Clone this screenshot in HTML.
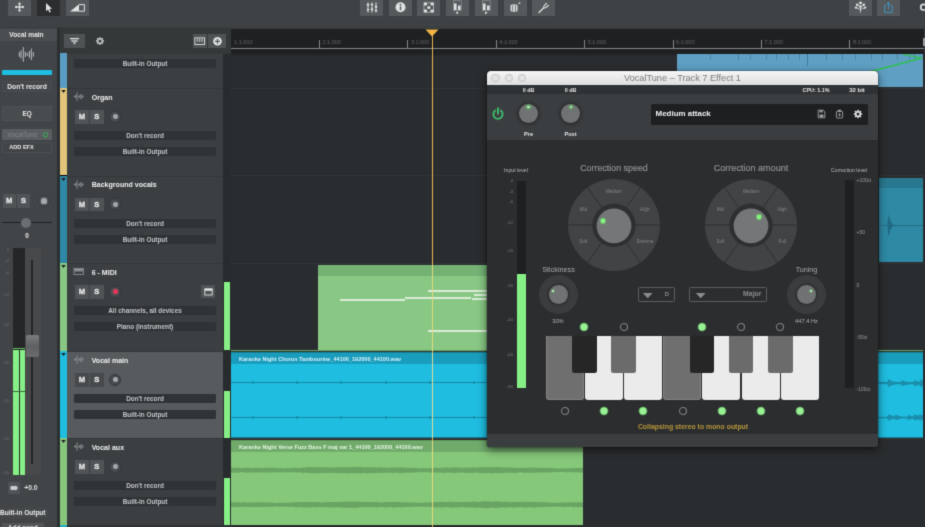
<!DOCTYPE html>
<html><head><meta charset="utf-8"><title>DAW</title>
<style>
html,body{margin:0;padding:0;}
body{width:925px;height:527px;overflow:hidden;background:#2a2d2f;position:relative;font-family:"Liberation Sans",sans-serif;}
#root{position:absolute;left:0;top:0;width:925px;height:527px;overflow:hidden;will-change:transform;filter:url(#sb);}
#root div,#root svg{position:absolute;box-sizing:border-box;}
.t{white-space:nowrap;overflow:visible;}
</style></head><body><svg width="0" height="0" style="position:absolute"><filter id="sb" x="0" y="0" width="100%" height="100%" color-interpolation-filters="sRGB"><feConvolveMatrix order="3" kernelMatrix="0.01917 0.10012 0.01917 0.10012 0.52283 0.10012 0.01917 0.10012 0.01917" divisor="1" edgeMode="duplicate" preserveAlpha="true"/></filter></svg><div id="root">
<div style="left:230px;top:28px;width:695px;height:499px;background:#2a2d2f;"></div>
<div style="left:231px;top:28px;width:693px;height:26px;background:#1e2022;"></div>
<div style="left:231px;top:48px;width:693px;height:1px;background:#85878a;"></div>
<div style="left:231px;top:54px;width:693px;height:3px;background:#2a2d2f;background:linear-gradient(#222527,#2a2d2f);"></div>
<div style="left:924px;top:28px;width:1px;height:26px;background:#3a3d3f;"></div>
<div style="left:923px;top:38px;width:2px;height:8px;background:#9a9c9e;"></div>
<div class="t" style="left:234.1px;top:38px;width:40px;height:9px;line-height:9px;font-size:5.5px;color:#62666a;font-weight:normal;text-align:left;">1:1:000</div>
<div style="left:319.0px;top:40px;width:1px;height:9px;background:#85878a;"></div>
<div class="t" style="left:322.5px;top:38px;width:40px;height:9px;line-height:9px;font-size:5.5px;color:#62666a;font-weight:normal;text-align:left;">2:1:000</div>
<div style="left:407.4px;top:40px;width:1px;height:9px;background:#85878a;"></div>
<div class="t" style="left:410.9px;top:38px;width:40px;height:9px;line-height:9px;font-size:5.5px;color:#62666a;font-weight:normal;text-align:left;">3:1:000</div>
<div style="left:495.8px;top:40px;width:1px;height:9px;background:#85878a;"></div>
<div class="t" style="left:499.3px;top:38px;width:40px;height:9px;line-height:9px;font-size:5.5px;color:#62666a;font-weight:normal;text-align:left;">4:1:000</div>
<div style="left:584.2px;top:40px;width:1px;height:9px;background:#85878a;"></div>
<div class="t" style="left:587.7px;top:38px;width:40px;height:9px;line-height:9px;font-size:5.5px;color:#62666a;font-weight:normal;text-align:left;">5:1:000</div>
<div style="left:672.6px;top:40px;width:1px;height:9px;background:#85878a;"></div>
<div class="t" style="left:676.1px;top:38px;width:40px;height:9px;line-height:9px;font-size:5.5px;color:#62666a;font-weight:normal;text-align:left;">6:1:000</div>
<div style="left:761.0px;top:40px;width:1px;height:9px;background:#85878a;"></div>
<div class="t" style="left:764.5px;top:38px;width:40px;height:9px;line-height:9px;font-size:5.5px;color:#62666a;font-weight:normal;text-align:left;">7:1:000</div>
<div style="left:849.4px;top:40px;width:1px;height:9px;background:#85878a;"></div>
<div class="t" style="left:852.9px;top:38px;width:40px;height:9px;line-height:9px;font-size:5.5px;color:#62666a;font-weight:normal;text-align:left;">8:1:000</div>
<div style="left:231px;top:88.3px;width:694px;height:1px;background:#323537;"></div>
<div style="left:231px;top:175.3px;width:694px;height:1px;background:#323537;"></div>
<div style="left:231px;top:263px;width:694px;height:1px;background:#323537;"></div>
<div style="left:231px;top:351px;width:694px;height:1px;background:#323537;"></div>
<div style="left:231px;top:438px;width:694px;height:1px;background:#323537;"></div>
<div style="left:677px;top:54px;width:246px;height:33.3px;background:#5f9fc3;"></div>
<div style="left:710px;top:54px;width:1px;height:5.5px;background:#4a86a8;"></div>
<div style="left:738px;top:54px;width:1px;height:5.5px;background:#4a86a8;"></div>
<div style="left:750px;top:54px;width:1px;height:5.5px;background:#4a86a8;"></div>
<div style="left:766px;top:54px;width:1px;height:5.5px;background:#4a86a8;"></div>
<div style="left:776px;top:54px;width:1px;height:5.5px;background:#4a86a8;"></div>
<div style="left:788px;top:54px;width:1px;height:5.5px;background:#4a86a8;"></div>
<div style="left:799px;top:54px;width:1px;height:5.5px;background:#4a86a8;"></div>
<div style="left:826px;top:54px;width:1px;height:5.5px;background:#4a86a8;"></div>
<div style="left:842px;top:54px;width:1px;height:5.5px;background:#4a86a8;"></div>
<div style="left:855px;top:54px;width:1px;height:5.5px;background:#4a86a8;"></div>
<div style="left:870.5px;top:54px;width:1px;height:5.5px;background:#4a86a8;"></div>
<div style="left:882px;top:54px;width:1px;height:5.5px;background:#4a86a8;"></div>
<div style="left:897px;top:54px;width:1px;height:5.5px;background:#4a86a8;"></div>
<div style="left:908.5px;top:54px;width:1px;height:5.5px;background:#4a86a8;"></div>
<div style="left:914px;top:54px;width:1px;height:5.5px;background:#4a86a8;"></div>
<div style="left:807px;top:54px;width:1px;height:12px;background:#3f7a9c;"></div>
<svg style="left:860px;top:54px" width="65" height="34" viewBox="0 0 65 34"><polyline points="8,18.3 61,4.3" fill="none" stroke="#2fc04e" stroke-width="1.4"/><polyline points="42.7,0.2 62.4,4.2" fill="none" stroke="#2fc04e" stroke-width="1.2"/></svg>
<div style="left:879px;top:178px;width:44.3px;height:84.3px;background:#2e89a4;"></div>
<div style="left:879px;top:178px;width:44.3px;height:10.4px;background:#29788f;"></div>
<div style="left:879px;top:225.2px;width:44.3px;height:1px;background:#256f88;"></div>
<svg style="left:879px;top:205px" width="45" height="40" viewBox="0 0 45 40"><path d="M8.3,20.5 L9.6,9 L11.4,16 L13.6,19.4 L18,20.5 L13.6,21.6 L11.4,25 L9.6,32 Z" fill="#226a83"/></svg>
<div style="left:318px;top:265px;width:552px;height:86px;background:#88c884;"></div>
<div style="left:318px;top:265px;width:552px;height:11px;background:#74b274;"></div>
<div style="left:231px;top:350px;width:692px;height:1.2px;background:#63a362;"></div>
<div style="left:339.5px;top:299.1px;width:65.7px;height:2px;background:#dcecd9;"></div>
<div style="left:405.3px;top:296.6px;width:66.2px;height:2px;background:#dcecd9;"></div>
<div style="left:427.5px;top:290.1px;width:90px;height:2.3px;background:#dcecd9;"></div>
<div style="left:474px;top:293.5px;width:40px;height:2px;background:#dcecd9;"></div>
<div style="left:472px;top:298.2px;width:40px;height:2px;background:#dcecd9;"></div>
<div style="left:427.5px;top:329.7px;width:90px;height:2.3px;background:#dcecd9;"></div>
<div style="left:231px;top:353px;width:692px;height:85px;background:#1fbde0;"></div>
<div style="left:231px;top:353px;width:692px;height:11px;background:#1a9dbd;"></div>
<div style="left:231px;top:352px;width:692px;height:1px;background:#16809a;"></div>
<div style="left:231px;top:437px;width:692px;height:1px;background:#16809a;"></div>
<div style="left:231px;top:382px;width:692px;height:1px;background:#178aa5;"></div>
<div style="left:231px;top:417px;width:692px;height:1px;background:#178aa5;"></div>
<div style="left:252px;top:381px;width:2px;height:3px;background:#178aa5;border-radius:1px;"></div>
<div style="left:252px;top:416px;width:2px;height:3px;background:#178aa5;border-radius:1px;"></div>
<div style="left:296px;top:381px;width:2px;height:3px;background:#178aa5;border-radius:1px;"></div>
<div style="left:296px;top:416px;width:2px;height:3px;background:#178aa5;border-radius:1px;"></div>
<div style="left:340px;top:381px;width:2px;height:3px;background:#178aa5;border-radius:1px;"></div>
<div style="left:340px;top:416px;width:2px;height:3px;background:#178aa5;border-radius:1px;"></div>
<div style="left:385px;top:381px;width:2px;height:3px;background:#178aa5;border-radius:1px;"></div>
<div style="left:385px;top:416px;width:2px;height:3px;background:#178aa5;border-radius:1px;"></div>
<div style="left:429px;top:381px;width:2px;height:3px;background:#178aa5;border-radius:1px;"></div>
<div style="left:429px;top:416px;width:2px;height:3px;background:#178aa5;border-radius:1px;"></div>
<div style="left:473px;top:381px;width:2px;height:3px;background:#178aa5;border-radius:1px;"></div>
<div style="left:473px;top:416px;width:2px;height:3px;background:#178aa5;border-radius:1px;"></div>
<div style="left:517px;top:381px;width:2px;height:3px;background:#178aa5;border-radius:1px;"></div>
<div style="left:517px;top:416px;width:2px;height:3px;background:#178aa5;border-radius:1px;"></div>
<div style="left:561px;top:381px;width:2px;height:3px;background:#178aa5;border-radius:1px;"></div>
<div style="left:561px;top:416px;width:2px;height:3px;background:#178aa5;border-radius:1px;"></div>
<div style="left:606px;top:381px;width:2px;height:3px;background:#178aa5;border-radius:1px;"></div>
<div style="left:606px;top:416px;width:2px;height:3px;background:#178aa5;border-radius:1px;"></div>
<div style="left:650px;top:381px;width:2px;height:3px;background:#178aa5;border-radius:1px;"></div>
<div style="left:650px;top:416px;width:2px;height:3px;background:#178aa5;border-radius:1px;"></div>
<div style="left:694px;top:381px;width:2px;height:3px;background:#178aa5;border-radius:1px;"></div>
<div style="left:694px;top:416px;width:2px;height:3px;background:#178aa5;border-radius:1px;"></div>
<div style="left:738px;top:381px;width:2px;height:3px;background:#178aa5;border-radius:1px;"></div>
<div style="left:738px;top:416px;width:2px;height:3px;background:#178aa5;border-radius:1px;"></div>
<div style="left:782px;top:381px;width:2px;height:3px;background:#178aa5;border-radius:1px;"></div>
<div style="left:782px;top:416px;width:2px;height:3px;background:#178aa5;border-radius:1px;"></div>
<div style="left:827px;top:381px;width:2px;height:3px;background:#178aa5;border-radius:1px;"></div>
<div style="left:827px;top:416px;width:2px;height:3px;background:#178aa5;border-radius:1px;"></div>
<div style="left:871px;top:381px;width:2px;height:3px;background:#178aa5;border-radius:1px;"></div>
<div style="left:871px;top:416px;width:2px;height:3px;background:#178aa5;border-radius:1px;"></div>
<div style="left:915px;top:381px;width:2px;height:3px;background:#178aa5;border-radius:1px;"></div>
<div style="left:915px;top:416px;width:2px;height:3px;background:#178aa5;border-radius:1px;"></div>
<div class="t" style="left:239px;top:354px;width:200px;height:10px;line-height:10px;font-size:5.55px;color:#d8f0f8;font-weight:bold;text-align:left;">Karaoke Night Chorus Tambourine_44100_192000_44100.wav</div>
<svg style="left:879px;top:353px" width="44" height="85" viewBox="0 0 44 85"><path d="M0.0,29.5 L0.5,29.4 L1.0,29.5 L1.5,29.3 L2.0,29.3 L2.5,29.6 L3.0,29.6 L3.5,29.2 L4.0,29.5 L4.5,29.5 L5.0,29.2 L5.5,29.4 L6.0,29.2 L6.5,29.4 L7.0,29.3 L7.5,29.6 L8.0,29.3 L8.5,28.5 L9.0,27.5 L9.5,26.2 L10.0,26.0 L10.5,26.8 L11.0,26.9 L11.5,27.3 L12.0,27.7 L12.5,28.1 L13.0,27.9 L13.5,28.3 L14.0,28.4 L14.5,28.4 L15.0,28.6 L15.5,28.6 L16.0,28.9 L16.5,28.8 L17.0,29.1 L17.5,28.9 L18.0,28.9 L18.5,29.4 L19.0,29.4 L19.5,29.4 L20.0,29.0 L20.5,29.3 L21.0,29.2 L21.5,29.4 L22.0,28.6 L22.5,27.9 L23.0,27.2 L23.5,27.4 L24.0,27.7 L24.5,27.8 L25.0,28.1 L25.5,28.2 L26.0,28.3 L26.5,28.4 L27.0,28.7 L27.5,29.0 L28.0,28.7 L28.5,28.8 L29.0,28.9 L29.5,29.1 L30.0,29.0 L30.5,29.3 L31.0,29.0 L31.5,29.2 L32.0,29.4 L32.5,29.5 L33.0,29.1 L33.5,29.1 L34.0,29.5 L34.5,28.9 L35.0,28.3 L35.5,27.6 L36.0,27.2 L36.5,27.3 L37.0,27.5 L37.5,28.2 L38.0,28.1 L38.5,28.6 L39.0,28.4 L39.5,28.7 L40.0,28.6 L40.5,28.6 L41.0,27.9 L41.5,26.7 L42.0,26.1 L42.5,26.7 L43.0,26.9 L43.5,27.5 L44.0,27.8 L44.0,32.6 L43.5,32.8 L43.0,33.4 L42.5,33.5 L42.0,34.0 L41.5,33.5 L41.0,32.4 L40.5,31.8 L40.0,31.9 L39.5,31.7 L39.0,32.0 L38.5,31.9 L38.0,32.3 L37.5,32.2 L37.0,32.8 L36.5,33.0 L36.0,33.1 L35.5,32.7 L35.0,32.1 L34.5,31.6 L34.0,31.0 L33.5,31.4 L33.0,31.4 L32.5,31.0 L32.0,31.1 L31.5,31.3 L31.0,31.4 L30.5,31.2 L30.0,31.4 L29.5,31.4 L29.0,31.6 L28.5,31.7 L28.0,31.7 L27.5,31.5 L27.0,31.8 L26.5,32.0 L26.0,32.1 L25.5,32.2 L25.0,32.3 L24.5,32.6 L24.0,32.6 L23.5,32.9 L23.0,33.1 L22.5,32.4 L22.0,31.8 L21.5,31.1 L21.0,31.3 L20.5,31.2 L20.0,31.4 L19.5,31.1 L19.0,31.1 L18.5,31.1 L18.0,31.5 L17.5,31.6 L17.0,31.4 L16.5,31.6 L16.0,31.5 L15.5,31.8 L15.0,31.8 L14.5,32.0 L14.0,32.1 L13.5,32.1 L13.0,32.4 L12.5,32.2 L12.0,32.6 L11.5,33.0 L11.0,33.4 L10.5,33.4 L10.0,34.1 L9.5,34.0 L9.0,32.8 L8.5,31.9 L8.0,31.2 L7.5,31.0 L7.0,31.2 L6.5,31.1 L6.0,31.3 L5.5,31.1 L5.0,31.3 L4.5,31.0 L4.0,31.0 L3.5,31.3 L3.0,30.9 L2.5,30.9 L2.0,31.2 L1.5,31.2 L1.0,31.1 L0.5,31.1 L0.0,31.0 Z" fill="#1a8eaa"/><path d="M0.0,63.8 L0.5,63.9 L1.0,63.8 L1.5,63.9 L2.0,63.9 L2.5,63.7 L3.0,63.5 L3.5,63.5 L4.0,63.6 L4.5,63.8 L5.0,63.7 L5.5,63.8 L6.0,63.9 L6.5,63.9 L7.0,63.8 L7.5,63.5 L8.0,63.5 L8.5,63.0 L9.0,62.2 L9.5,61.6 L10.0,61.4 L10.5,61.6 L11.0,61.9 L11.5,62.0 L12.0,62.2 L12.5,62.8 L13.0,62.7 L13.5,62.8 L14.0,63.0 L14.5,63.3 L15.0,63.2 L15.5,63.5 L16.0,62.6 L16.5,62.1 L17.0,61.8 L17.5,62.2 L18.0,62.1 L18.5,62.5 L19.0,62.5 L19.5,62.7 L20.0,63.0 L20.5,63.1 L21.0,63.1 L21.5,63.3 L22.0,63.5 L22.5,63.5 L23.0,63.3 L23.5,63.7 L24.0,63.7 L24.5,63.5 L25.0,63.7 L25.5,63.6 L26.0,63.6 L26.5,63.7 L27.0,63.4 L27.5,63.8 L28.0,63.7 L28.5,63.2 L29.0,62.4 L29.5,62.0 L30.0,62.2 L30.5,62.2 L31.0,62.6 L31.5,62.7 L32.0,62.7 L32.5,63.2 L33.0,63.3 L33.5,63.3 L34.0,63.1 L34.5,62.9 L35.0,62.4 L35.5,61.6 L36.0,61.4 L36.5,61.6 L37.0,62.1 L37.5,62.0 L38.0,62.2 L38.5,62.3 L39.0,62.6 L39.5,62.6 L40.0,62.6 L40.5,61.9 L41.0,60.9 L41.5,61.4 L42.0,61.9 L42.5,61.9 L43.0,62.3 L43.5,62.4 L44.0,62.8 L44.0,66.2 L43.5,66.6 L43.0,66.7 L42.5,67.0 L42.0,67.0 L41.5,67.5 L41.0,67.9 L40.5,67.1 L40.0,66.4 L39.5,66.4 L39.0,66.4 L38.5,66.6 L38.0,66.8 L37.5,66.9 L37.0,66.8 L36.5,67.3 L36.0,67.5 L35.5,67.3 L35.0,66.6 L34.5,66.1 L34.0,65.9 L33.5,65.8 L33.0,65.8 L32.5,65.9 L32.0,66.3 L31.5,66.3 L31.0,66.4 L30.5,66.7 L30.0,66.8 L29.5,67.0 L29.0,66.6 L28.5,65.9 L28.0,65.4 L27.5,65.3 L27.0,65.7 L26.5,65.4 L26.0,65.5 L25.5,65.5 L25.0,65.4 L24.5,65.6 L24.0,65.4 L23.5,65.4 L23.0,65.8 L22.5,65.6 L22.0,65.6 L21.5,65.8 L21.0,65.9 L20.5,65.9 L20.0,66.1 L19.5,66.3 L19.0,66.5 L18.5,66.5 L18.0,66.8 L17.5,66.8 L17.0,67.1 L16.5,66.8 L16.0,66.4 L15.5,65.6 L15.0,65.8 L14.5,65.8 L14.0,66.0 L13.5,66.2 L13.0,66.3 L12.5,66.2 L12.0,66.7 L11.5,66.9 L11.0,67.1 L10.5,67.3 L10.0,67.5 L9.5,67.3 L9.0,66.8 L8.5,66.0 L8.0,65.6 L7.5,65.6 L7.0,65.3 L6.5,65.2 L6.0,65.3 L5.5,65.3 L5.0,65.4 L4.5,65.3 L4.0,65.5 L3.5,65.5 L3.0,65.6 L2.5,65.4 L2.0,65.2 L1.5,65.3 L1.0,65.4 L0.5,65.2 L0.0,65.3 Z" fill="#1a8eaa"/></svg>
<div style="left:231px;top:441px;width:352px;height:83.5px;background:#86c87a;"></div>
<div style="left:231px;top:441px;width:352px;height:11px;background:#71ab6c;"></div>
<div style="left:231px;top:440px;width:352px;height:1px;background:#5f9a5c;"></div>
<div class="t" style="left:239px;top:442px;width:220px;height:10px;line-height:10px;font-size:5.55px;color:#e4f4e0;font-weight:bold;text-align:left;">Karaoke Night Verse Fuzz Bass F maj var 1_44100_192000_44100.wav</div>
<svg style="left:231px;top:441px" width="352" height="86" viewBox="0 0 352 86"><path d="M0.0,26.6 L1.0,26.6 L2.0,26.7 L3.0,26.5 L4.0,26.9 L5.0,26.6 L6.0,27.1 L7.0,26.5 L8.0,26.8 L9.0,27.2 L10.0,27.2 L11.0,27.1 L12.0,27.0 L13.0,26.7 L14.0,26.8 L15.0,26.8 L16.0,27.1 L17.0,26.6 L18.0,26.8 L19.0,27.1 L20.0,27.2 L21.0,26.9 L22.0,26.9 L23.0,26.6 L24.0,27.0 L25.0,26.8 L26.0,26.8 L27.0,26.6 L28.0,26.9 L29.0,26.8 L30.0,26.5 L31.0,26.9 L32.0,27.0 L33.0,26.9 L34.0,26.8 L35.0,26.6 L36.0,26.7 L37.0,26.8 L38.0,27.0 L39.0,26.6 L40.0,26.6 L41.0,27.0 L42.0,26.8 L43.0,26.6 L44.0,27.1 L45.0,27.1 L46.0,27.3 L47.0,27.0 L48.0,27.0 L49.0,27.1 L50.0,27.1 L51.0,26.9 L52.0,27.4 L53.0,26.9 L54.0,27.4 L55.0,26.9 L56.0,26.8 L57.0,27.1 L58.0,27.4 L59.0,26.8 L60.0,26.9 L61.0,26.8 L62.0,27.1 L63.0,26.8 L64.0,27.1 L65.0,26.6 L66.0,27.0 L67.0,27.0 L68.0,26.9 L69.0,27.0 L70.0,26.7 L71.0,26.8 L72.0,26.3 L73.0,26.4 L74.0,26.4 L75.0,26.8 L76.0,26.1 L77.0,26.0 L78.0,26.2 L79.0,26.2 L80.0,26.0 L81.0,26.3 L82.0,26.0 L83.0,26.1 L84.0,26.0 L85.0,26.2 L86.0,26.0 L87.0,26.1 L88.0,26.3 L89.0,26.4 L90.0,26.3 L91.0,26.3 L92.0,26.1 L93.0,26.5 L94.0,26.3 L95.0,26.2 L96.0,26.2 L97.0,26.4 L98.0,26.6 L99.0,26.4 L100.0,26.1 L101.0,26.8 L102.0,26.3 L103.0,26.6 L104.0,26.2 L105.0,26.1 L106.0,26.2 L107.0,26.3 L108.0,26.0 L109.0,26.3 L110.0,26.3 L111.0,26.1 L112.0,25.9 L113.0,25.8 L114.0,26.3 L115.0,26.2 L116.0,26.0 L117.0,25.9 L118.0,25.7 L119.0,25.9 L120.0,26.2 L121.0,26.2 L122.0,25.8 L123.0,25.6 L124.0,26.1 L125.0,26.2 L126.0,26.0 L127.0,26.2 L128.0,25.9 L129.0,25.8 L130.0,25.6 L131.0,26.2 L132.0,26.2 L133.0,26.0 L134.0,26.3 L135.0,26.2 L136.0,26.1 L137.0,26.0 L138.0,26.0 L139.0,26.6 L140.0,26.2 L141.0,26.4 L142.0,26.1 L143.0,26.4 L144.0,26.3 L145.0,26.5 L146.0,26.7 L147.0,26.3 L148.0,26.4 L149.0,26.3 L150.0,26.2 L151.0,26.4 L152.0,26.3 L153.0,26.7 L154.0,26.6 L155.0,26.4 L156.0,26.9 L157.0,26.8 L158.0,26.8 L159.0,26.3 L160.0,26.7 L161.0,26.3 L162.0,26.3 L163.0,26.5 L164.0,26.7 L165.0,26.4 L166.0,26.3 L167.0,26.4 L168.0,26.4 L169.0,26.5 L170.0,26.2 L171.0,26.2 L172.0,26.5 L173.0,26.7 L174.0,26.5 L175.0,26.9 L176.0,26.6 L177.0,26.4 L178.0,26.7 L179.0,27.0 L180.0,26.8 L181.0,26.5 L182.0,26.9 L183.0,26.9 L184.0,26.6 L185.0,27.1 L186.0,26.9 L187.0,27.3 L188.0,27.4 L189.0,27.3 L190.0,27.2 L191.0,27.0 L192.0,26.9 L193.0,27.1 L194.0,27.3 L195.0,27.1 L196.0,27.2 L197.0,27.3 L198.0,27.0 L199.0,27.0 L200.0,26.9 L201.0,27.2 L202.0,26.7 L203.0,27.0 L204.0,26.6 L205.0,26.5 L206.0,27.0 L207.0,26.6 L208.0,27.0 L209.0,26.7 L210.0,26.9 L211.0,26.5 L212.0,26.8 L213.0,26.2 L214.0,26.8 L215.0,26.3 L216.0,26.3 L217.0,26.8 L218.0,26.8 L219.0,26.4 L220.0,26.7 L221.0,26.7 L222.0,26.1 L223.0,26.8 L224.0,26.2 L225.0,26.3 L226.0,26.5 L227.0,26.6 L228.0,26.9 L229.0,26.3 L230.0,26.6 L231.0,26.7 L232.0,26.8 L233.0,27.0 L234.0,26.4 L235.0,26.4 L236.0,26.7 L237.0,26.6 L238.0,26.4 L239.0,26.3 L240.0,26.4 L241.0,26.7 L242.0,26.3 L243.0,26.4 L244.0,26.6 L245.0,26.8 L246.0,26.5 L247.0,26.5 L248.0,26.3 L249.0,26.0 L250.0,26.4 L251.0,26.2 L252.0,26.3 L253.0,26.1 L254.0,26.0 L255.0,26.5 L256.0,25.9 L257.0,26.1 L258.0,26.3 L259.0,26.3 L260.0,25.7 L261.0,26.0 L262.0,26.0 L263.0,25.9 L264.0,26.3 L265.0,25.9 L266.0,25.8 L267.0,26.1 L268.0,26.1 L269.0,26.5 L270.0,26.2 L271.0,26.2 L272.0,26.4 L273.0,26.3 L274.0,26.2 L275.0,26.7 L276.0,26.7 L277.0,26.3 L278.0,26.2 L279.0,26.9 L280.0,26.3 L281.0,26.3 L282.0,26.7 L283.0,26.9 L284.0,26.4 L285.0,26.7 L286.0,26.5 L287.0,27.0 L288.0,26.8 L289.0,27.1 L290.0,27.0 L291.0,26.6 L292.0,26.9 L293.0,26.8 L294.0,26.7 L295.0,26.4 L296.0,26.9 L297.0,26.4 L298.0,26.6 L299.0,26.8 L300.0,26.6 L301.0,26.5 L302.0,26.8 L303.0,26.3 L304.0,26.3 L305.0,26.9 L306.0,26.7 L307.0,26.9 L308.0,26.9 L309.0,26.5 L310.0,26.6 L311.0,26.7 L312.0,26.9 L313.0,26.5 L314.0,27.1 L315.0,26.8 L316.0,27.1 L317.0,27.1 L318.0,27.1 L319.0,26.7 L320.0,27.0 L321.0,26.8 L322.0,27.2 L323.0,26.9 L324.0,27.5 L325.0,27.3 L326.0,27.4 L327.0,27.6 L328.0,27.2 L329.0,27.5 L330.0,27.2 L331.0,27.6 L332.0,27.2 L333.0,27.6 L334.0,27.3 L335.0,27.0 L336.0,27.4 L337.0,27.4 L338.0,27.3 L339.0,27.0 L340.0,27.3 L341.0,27.3 L342.0,27.2 L343.0,27.0 L344.0,27.0 L345.0,27.0 L346.0,26.8 L347.0,27.1 L348.0,26.9 L349.0,26.8 L350.0,26.7 L351.0,27.1 L352.0,26.6 L352.0,31.5 L351.0,31.3 L350.0,31.8 L349.0,31.8 L348.0,31.5 L347.0,31.1 L346.0,31.7 L345.0,31.2 L344.0,31.5 L343.0,31.5 L342.0,31.1 L341.0,31.1 L340.0,31.0 L339.0,31.3 L338.0,31.2 L337.0,30.9 L336.0,31.2 L335.0,31.5 L334.0,31.3 L333.0,30.9 L332.0,31.1 L331.0,30.8 L330.0,31.1 L329.0,31.0 L328.0,31.0 L327.0,30.7 L326.0,31.1 L325.0,31.2 L324.0,30.9 L323.0,31.2 L322.0,31.0 L321.0,31.5 L320.0,31.4 L319.0,31.6 L318.0,31.4 L317.0,31.4 L316.0,31.2 L315.0,31.7 L314.0,31.4 L313.0,31.5 L312.0,31.6 L311.0,31.5 L310.0,31.7 L309.0,31.8 L308.0,31.2 L307.0,31.5 L306.0,31.7 L305.0,31.3 L304.0,31.7 L303.0,32.3 L302.0,31.4 L301.0,31.9 L300.0,31.8 L299.0,31.6 L298.0,31.7 L297.0,32.1 L296.0,31.3 L295.0,32.1 L294.0,31.9 L293.0,31.7 L292.0,31.5 L291.0,31.7 L290.0,31.3 L289.0,31.3 L288.0,31.4 L287.0,31.4 L286.0,31.9 L285.0,31.9 L284.0,32.1 L283.0,31.5 L282.0,31.9 L281.0,31.9 L280.0,31.8 L279.0,31.7 L278.0,32.2 L277.0,31.9 L276.0,31.4 L275.0,31.5 L274.0,32.0 L273.0,31.9 L272.0,32.0 L271.0,32.0 L270.0,32.1 L269.0,32.1 L268.0,32.2 L267.0,32.0 L266.0,32.2 L265.0,32.1 L264.0,32.0 L263.0,32.5 L262.0,32.6 L261.0,32.6 L260.0,32.5 L259.0,31.8 L258.0,32.0 L257.0,31.9 L256.0,32.2 L255.0,31.9 L254.0,32.6 L253.0,32.3 L252.0,32.3 L251.0,32.1 L250.0,32.0 L249.0,32.3 L248.0,31.8 L247.0,31.9 L246.0,31.6 L245.0,31.5 L244.0,31.9 L243.0,32.1 L242.0,32.1 L241.0,31.9 L240.0,32.1 L239.0,32.1 L238.0,31.7 L237.0,32.0 L236.0,31.7 L235.0,32.0 L234.0,32.0 L233.0,31.6 L232.0,31.5 L231.0,31.5 L230.0,31.8 L229.0,31.8 L228.0,31.6 L227.0,31.8 L226.0,31.8 L225.0,31.9 L224.0,32.1 L223.0,31.4 L222.0,32.4 L221.0,31.9 L220.0,31.5 L219.0,31.9 L218.0,31.6 L217.0,31.4 L216.0,31.8 L215.0,32.0 L214.0,31.6 L213.0,32.3 L212.0,31.7 L211.0,31.6 L210.0,31.4 L209.0,31.8 L208.0,31.5 L207.0,31.6 L206.0,31.2 L205.0,32.1 L204.0,31.6 L203.0,31.3 L202.0,31.8 L201.0,31.3 L200.0,31.6 L199.0,31.5 L198.0,31.5 L197.0,31.0 L196.0,31.2 L195.0,31.2 L194.0,31.1 L193.0,31.2 L192.0,31.2 L191.0,31.2 L190.0,31.1 L189.0,31.2 L188.0,30.9 L187.0,31.2 L186.0,31.7 L185.0,31.2 L184.0,31.7 L183.0,31.6 L182.0,31.3 L181.0,31.7 L180.0,31.8 L179.0,31.4 L178.0,31.8 L177.0,31.9 L176.0,31.7 L175.0,31.7 L174.0,31.8 L173.0,31.6 L172.0,31.9 L171.0,32.4 L170.0,31.9 L169.0,32.0 L168.0,31.8 L167.0,32.1 L166.0,32.1 L165.0,31.8 L164.0,31.5 L163.0,32.1 L162.0,32.2 L161.0,32.2 L160.0,31.6 L159.0,31.8 L158.0,31.5 L157.0,31.7 L156.0,31.6 L155.0,31.9 L154.0,31.7 L153.0,31.4 L152.0,32.2 L151.0,31.8 L150.0,32.1 L149.0,32.3 L148.0,31.7 L147.0,32.1 L146.0,31.7 L145.0,31.9 L144.0,32.3 L143.0,32.1 L142.0,32.1 L141.0,32.0 L140.0,31.9 L139.0,32.0 L138.0,32.5 L137.0,32.2 L136.0,32.2 L135.0,32.2 L134.0,31.9 L133.0,32.4 L132.0,31.8 L131.0,32.1 L130.0,32.8 L129.0,32.7 L128.0,32.4 L127.0,32.2 L126.0,32.0 L125.0,32.3 L124.0,32.2 L123.0,32.3 L122.0,32.3 L121.0,32.3 L120.0,32.3 L119.0,32.1 L118.0,32.9 L117.0,32.2 L116.0,32.3 L115.0,32.0 L114.0,32.0 L113.0,32.3 L112.0,32.5 L111.0,32.4 L110.0,31.8 L109.0,32.1 L108.0,32.6 L107.0,32.2 L106.0,31.9 L105.0,32.1 L104.0,32.0 L103.0,31.9 L102.0,31.8 L101.0,31.5 L100.0,32.0 L99.0,32.0 L98.0,31.8 L97.0,31.9 L96.0,31.8 L95.0,31.9 L94.0,31.9 L93.0,32.0 L92.0,32.3 L91.0,32.3 L90.0,31.8 L89.0,31.9 L88.0,32.1 L87.0,32.4 L86.0,32.2 L85.0,32.4 L84.0,32.2 L83.0,32.3 L82.0,32.4 L81.0,32.2 L80.0,32.0 L79.0,32.0 L78.0,32.0 L77.0,31.9 L76.0,32.3 L75.0,31.3 L74.0,31.7 L73.0,32.0 L72.0,32.3 L71.0,31.4 L70.0,31.7 L69.0,31.2 L68.0,31.4 L67.0,31.2 L66.0,31.6 L65.0,31.8 L64.0,31.3 L63.0,31.3 L62.0,31.1 L61.0,31.6 L60.0,31.3 L59.0,31.4 L58.0,30.8 L57.0,31.3 L56.0,31.7 L55.0,31.4 L54.0,31.1 L53.0,31.3 L52.0,31.2 L51.0,31.3 L50.0,31.3 L49.0,31.4 L48.0,31.3 L47.0,31.2 L46.0,30.9 L45.0,31.2 L44.0,31.4 L43.0,31.6 L42.0,31.3 L41.0,31.6 L40.0,31.6 L39.0,31.6 L38.0,31.6 L37.0,31.4 L36.0,31.5 L35.0,31.6 L34.0,31.4 L33.0,31.5 L32.0,31.5 L31.0,31.3 L30.0,31.6 L29.0,31.7 L28.0,31.3 L27.0,31.8 L26.0,31.3 L25.0,31.8 L24.0,31.6 L23.0,31.5 L22.0,31.7 L21.0,31.6 L20.0,31.3 L19.0,31.2 L18.0,31.5 L17.0,31.9 L16.0,31.5 L15.0,31.5 L14.0,31.5 L13.0,31.7 L12.0,31.4 L11.0,31.1 L10.0,31.0 L9.0,31.2 L8.0,31.4 L7.0,31.9 L6.0,31.5 L5.0,31.9 L4.0,31.3 L3.0,31.6 L2.0,31.7 L1.0,31.6 L0.0,31.7 Z" fill="#69a463"/><path d="M0.0,61.5 L1.0,61.4 L2.0,61.1 L3.0,61.3 L4.0,61.3 L5.0,61.5 L6.0,61.2 L7.0,61.2 L8.0,61.3 L9.0,61.5 L10.0,61.8 L11.0,61.2 L12.0,61.8 L13.0,61.1 L14.0,61.5 L15.0,61.6 L16.0,61.7 L17.0,61.7 L18.0,61.2 L19.0,61.4 L20.0,61.4 L21.0,61.7 L22.0,61.0 L23.0,61.2 L24.0,61.4 L25.0,61.2 L26.0,61.5 L27.0,61.3 L28.0,61.3 L29.0,61.1 L30.0,61.3 L31.0,61.4 L32.0,61.2 L33.0,61.4 L34.0,61.3 L35.0,61.6 L36.0,61.4 L37.0,61.6 L38.0,61.7 L39.0,61.3 L40.0,61.3 L41.0,61.4 L42.0,61.9 L43.0,61.4 L44.0,61.9 L45.0,61.9 L46.0,62.2 L47.0,61.7 L48.0,61.5 L49.0,62.2 L50.0,61.6 L51.0,61.8 L52.0,61.8 L53.0,61.7 L54.0,61.5 L55.0,62.0 L56.0,61.5 L57.0,61.4 L58.0,61.6 L59.0,61.9 L60.0,61.8 L61.0,61.4 L62.0,61.3 L63.0,61.7 L64.0,61.1 L65.0,61.3 L66.0,61.0 L67.0,61.4 L68.0,61.0 L69.0,61.2 L70.0,61.3 L71.0,61.1 L72.0,61.0 L73.0,60.9 L74.0,60.8 L75.0,60.9 L76.0,61.3 L77.0,61.2 L78.0,60.9 L79.0,60.9 L80.0,61.0 L81.0,61.1 L82.0,61.1 L83.0,60.9 L84.0,61.4 L85.0,60.9 L86.0,61.0 L87.0,61.2 L88.0,61.1 L89.0,61.4 L90.0,61.3 L91.0,61.3 L92.0,61.5 L93.0,61.3 L94.0,61.2 L95.0,60.9 L96.0,61.0 L97.0,61.2 L98.0,60.9 L99.0,61.1 L100.0,60.9 L101.0,61.0 L102.0,61.1 L103.0,60.9 L104.0,60.9 L105.0,61.0 L106.0,61.0 L107.0,61.0 L108.0,61.1 L109.0,60.7 L110.0,61.1 L111.0,60.9 L112.0,60.6 L113.0,60.4 L114.0,60.7 L115.0,60.5 L116.0,60.5 L117.0,60.6 L118.0,60.7 L119.0,60.6 L120.0,60.6 L121.0,60.7 L122.0,60.7 L123.0,60.5 L124.0,60.3 L125.0,60.4 L126.0,60.4 L127.0,60.9 L128.0,60.4 L129.0,60.4 L130.0,60.9 L131.0,61.0 L132.0,60.7 L133.0,61.1 L134.0,61.0 L135.0,60.9 L136.0,60.9 L137.0,61.1 L138.0,60.9 L139.0,61.1 L140.0,61.1 L141.0,61.2 L142.0,61.1 L143.0,61.3 L144.0,61.2 L145.0,61.1 L146.0,61.1 L147.0,61.3 L148.0,61.0 L149.0,61.4 L150.0,61.5 L151.0,61.5 L152.0,61.3 L153.0,61.0 L154.0,60.8 L155.0,60.9 L156.0,61.4 L157.0,60.8 L158.0,61.3 L159.0,61.1 L160.0,61.2 L161.0,61.3 L162.0,60.7 L163.0,60.8 L164.0,61.1 L165.0,60.7 L166.0,60.9 L167.0,61.2 L168.0,60.9 L169.0,60.9 L170.0,61.2 L171.0,60.8 L172.0,61.4 L173.0,61.2 L174.0,61.4 L175.0,61.2 L176.0,61.3 L177.0,61.2 L178.0,61.4 L179.0,61.2 L180.0,61.7 L181.0,61.4 L182.0,61.6 L183.0,61.6 L184.0,61.7 L185.0,61.6 L186.0,61.7 L187.0,61.7 L188.0,61.7 L189.0,61.7 L190.0,61.5 L191.0,61.6 L192.0,61.9 L193.0,61.8 L194.0,61.3 L195.0,61.4 L196.0,61.5 L197.0,61.2 L198.0,61.6 L199.0,61.3 L200.0,61.3 L201.0,61.3 L202.0,61.3 L203.0,61.3 L204.0,61.0 L205.0,61.1 L206.0,61.1 L207.0,60.9 L208.0,61.1 L209.0,61.3 L210.0,60.7 L211.0,60.6 L212.0,61.1 L213.0,60.9 L214.0,61.0 L215.0,61.2 L216.0,61.1 L217.0,61.1 L218.0,60.6 L219.0,60.9 L220.0,60.6 L221.0,61.1 L222.0,60.6 L223.0,60.9 L224.0,61.2 L225.0,60.8 L226.0,60.8 L227.0,61.0 L228.0,61.3 L229.0,61.2 L230.0,60.8 L231.0,61.1 L232.0,61.0 L233.0,61.1 L234.0,60.7 L235.0,60.9 L236.0,60.7 L237.0,60.9 L238.0,61.0 L239.0,61.2 L240.0,60.8 L241.0,60.5 L242.0,60.8 L243.0,60.6 L244.0,60.5 L245.0,60.4 L246.0,60.7 L247.0,60.9 L248.0,60.9 L249.0,60.8 L250.0,60.7 L251.0,60.4 L252.0,60.2 L253.0,60.0 L254.0,60.4 L255.0,60.5 L256.0,60.2 L257.0,60.1 L258.0,60.5 L259.0,60.4 L260.0,60.7 L261.0,60.4 L262.0,60.4 L263.0,60.5 L264.0,60.4 L265.0,60.1 L266.0,60.6 L267.0,60.6 L268.0,60.9 L269.0,60.3 L270.0,60.5 L271.0,60.9 L272.0,61.0 L273.0,60.8 L274.0,60.7 L275.0,60.6 L276.0,60.6 L277.0,61.2 L278.0,60.6 L279.0,60.9 L280.0,61.2 L281.0,61.3 L282.0,60.7 L283.0,61.0 L284.0,61.0 L285.0,60.9 L286.0,60.8 L287.0,60.9 L288.0,61.0 L289.0,61.2 L290.0,61.0 L291.0,60.9 L292.0,60.6 L293.0,60.9 L294.0,61.0 L295.0,60.6 L296.0,60.8 L297.0,61.1 L298.0,61.1 L299.0,60.8 L300.0,61.1 L301.0,60.9 L302.0,61.1 L303.0,60.6 L304.0,60.8 L305.0,61.2 L306.0,61.0 L307.0,61.2 L308.0,61.0 L309.0,60.8 L310.0,61.4 L311.0,61.3 L312.0,60.9 L313.0,61.3 L314.0,61.1 L315.0,61.5 L316.0,61.1 L317.0,61.7 L318.0,61.8 L319.0,61.8 L320.0,61.8 L321.0,61.3 L322.0,61.6 L323.0,61.9 L324.0,61.5 L325.0,62.0 L326.0,61.4 L327.0,62.0 L328.0,61.4 L329.0,61.5 L330.0,61.6 L331.0,61.6 L332.0,61.4 L333.0,61.3 L334.0,61.3 L335.0,61.2 L336.0,61.7 L337.0,61.3 L338.0,61.3 L339.0,61.8 L340.0,61.8 L341.0,61.1 L342.0,61.1 L343.0,61.4 L344.0,61.2 L345.0,61.5 L346.0,61.5 L347.0,61.1 L348.0,61.0 L349.0,61.3 L350.0,61.5 L351.0,61.3 L352.0,61.3 L352.0,66.2 L351.0,66.0 L350.0,66.0 L349.0,66.1 L348.0,66.2 L347.0,66.4 L346.0,65.9 L345.0,66.0 L344.0,66.3 L343.0,66.1 L342.0,66.5 L341.0,66.3 L340.0,65.5 L339.0,65.4 L338.0,66.0 L337.0,66.0 L336.0,65.8 L335.0,65.9 L334.0,66.3 L333.0,66.0 L332.0,65.9 L331.0,65.9 L330.0,65.7 L329.0,65.7 L328.0,65.8 L327.0,65.3 L326.0,65.8 L325.0,65.4 L324.0,66.1 L323.0,65.5 L322.0,65.6 L321.0,66.2 L320.0,65.6 L319.0,65.6 L318.0,65.7 L317.0,65.8 L316.0,66.0 L315.0,65.8 L314.0,66.1 L313.0,65.8 L312.0,66.5 L311.0,66.3 L310.0,65.8 L309.0,66.3 L308.0,66.2 L307.0,66.0 L306.0,66.6 L305.0,66.4 L304.0,66.5 L303.0,66.8 L302.0,66.0 L301.0,66.6 L300.0,66.4 L299.0,66.3 L298.0,66.1 L297.0,66.2 L296.0,66.6 L295.0,67.0 L294.0,66.2 L293.0,66.4 L292.0,66.8 L291.0,66.3 L290.0,66.1 L289.0,66.0 L288.0,66.3 L287.0,66.2 L286.0,66.6 L285.0,66.7 L284.0,66.5 L283.0,66.4 L282.0,66.9 L281.0,66.1 L280.0,66.0 L279.0,66.2 L278.0,66.7 L277.0,66.4 L276.0,66.6 L275.0,66.6 L274.0,66.9 L273.0,66.7 L272.0,66.1 L271.0,66.6 L270.0,66.6 L269.0,67.1 L268.0,66.3 L267.0,66.9 L266.0,66.9 L265.0,67.4 L264.0,66.9 L263.0,66.8 L262.0,66.8 L261.0,66.6 L260.0,66.7 L259.0,66.7 L258.0,67.0 L257.0,67.3 L256.0,67.2 L255.0,66.8 L254.0,67.0 L253.0,67.0 L252.0,67.3 L251.0,66.6 L250.0,66.9 L249.0,66.6 L248.0,66.7 L247.0,66.2 L246.0,66.4 L245.0,67.0 L244.0,66.9 L243.0,66.7 L242.0,66.6 L241.0,66.6 L240.0,66.5 L239.0,66.3 L238.0,66.5 L237.0,66.6 L236.0,66.6 L235.0,66.6 L234.0,66.6 L233.0,66.0 L232.0,66.2 L231.0,66.0 L230.0,66.6 L229.0,66.3 L228.0,66.1 L227.0,66.6 L226.0,66.4 L225.0,66.6 L224.0,66.4 L223.0,66.3 L222.0,66.9 L221.0,66.4 L220.0,66.5 L219.0,66.5 L218.0,66.6 L217.0,66.0 L216.0,66.1 L215.0,65.9 L214.0,66.2 L213.0,66.3 L212.0,66.4 L211.0,67.0 L210.0,66.5 L209.0,66.3 L208.0,66.1 L207.0,66.5 L206.0,66.4 L205.0,66.4 L204.0,66.2 L203.0,66.2 L202.0,66.0 L201.0,66.3 L200.0,66.3 L199.0,66.1 L198.0,65.8 L197.0,66.0 L196.0,65.8 L195.0,65.8 L194.0,66.3 L193.0,65.5 L192.0,65.6 L191.0,65.9 L190.0,65.8 L189.0,65.6 L188.0,65.9 L187.0,65.6 L186.0,65.6 L185.0,65.6 L184.0,65.7 L183.0,66.0 L182.0,65.7 L181.0,66.0 L180.0,65.7 L179.0,66.2 L178.0,65.7 L177.0,66.0 L176.0,66.3 L175.0,66.0 L174.0,65.9 L173.0,66.1 L172.0,66.1 L171.0,66.5 L170.0,66.4 L169.0,66.3 L168.0,66.6 L167.0,66.1 L166.0,66.1 L165.0,66.6 L164.0,66.1 L163.0,66.7 L162.0,66.9 L161.0,66.1 L160.0,66.0 L159.0,66.3 L158.0,66.2 L157.0,66.5 L156.0,65.8 L155.0,66.6 L154.0,66.8 L153.0,66.4 L152.0,65.8 L151.0,65.7 L150.0,65.7 L149.0,65.7 L148.0,66.5 L147.0,66.1 L146.0,66.2 L145.0,66.5 L144.0,66.3 L143.0,66.2 L142.0,66.3 L141.0,66.1 L140.0,66.3 L139.0,66.3 L138.0,66.5 L137.0,66.3 L136.0,66.5 L135.0,66.2 L134.0,66.5 L133.0,66.1 L132.0,66.5 L131.0,66.1 L130.0,66.1 L129.0,66.5 L128.0,66.6 L127.0,66.6 L126.0,66.7 L125.0,66.8 L124.0,67.2 L123.0,66.5 L122.0,66.9 L121.0,66.4 L120.0,66.9 L119.0,66.6 L118.0,66.5 L117.0,66.8 L116.0,67.0 L115.0,67.0 L114.0,66.3 L113.0,67.2 L112.0,66.6 L111.0,66.7 L110.0,66.4 L109.0,66.4 L108.0,66.1 L107.0,66.3 L106.0,66.3 L105.0,66.4 L104.0,66.5 L103.0,66.7 L102.0,66.3 L101.0,66.4 L100.0,66.3 L99.0,66.4 L98.0,66.3 L97.0,66.2 L96.0,66.1 L95.0,66.4 L94.0,66.0 L93.0,65.9 L92.0,65.8 L91.0,66.3 L90.0,66.0 L89.0,66.1 L88.0,66.2 L87.0,65.9 L86.0,66.6 L85.0,66.5 L84.0,65.9 L83.0,66.2 L82.0,66.1 L81.0,66.1 L80.0,66.4 L79.0,66.2 L78.0,66.4 L77.0,66.4 L76.0,66.0 L75.0,66.4 L74.0,66.5 L73.0,66.7 L72.0,66.6 L71.0,66.0 L70.0,66.2 L69.0,66.1 L68.0,66.5 L67.0,66.0 L66.0,66.4 L65.0,66.3 L64.0,66.3 L63.0,65.7 L62.0,66.0 L61.0,65.7 L60.0,65.7 L59.0,65.5 L58.0,65.9 L57.0,65.9 L56.0,65.8 L55.0,65.3 L54.0,66.1 L53.0,65.6 L52.0,65.6 L51.0,65.5 L50.0,65.9 L49.0,65.2 L48.0,65.9 L47.0,65.9 L46.0,65.1 L45.0,65.4 L44.0,65.6 L43.0,65.7 L42.0,65.6 L41.0,65.9 L40.0,65.9 L39.0,66.1 L38.0,65.7 L37.0,65.7 L36.0,65.7 L35.0,65.7 L34.0,65.8 L33.0,65.8 L32.0,65.9 L31.0,65.9 L30.0,65.9 L29.0,66.2 L28.0,65.8 L27.0,66.2 L26.0,65.8 L25.0,65.9 L24.0,66.0 L23.0,66.1 L22.0,66.6 L21.0,65.8 L20.0,65.9 L19.0,66.0 L18.0,66.1 L17.0,65.5 L16.0,65.8 L15.0,65.9 L14.0,65.7 L13.0,66.0 L12.0,65.8 L11.0,66.2 L10.0,65.4 L9.0,66.0 L8.0,65.9 L7.0,65.9 L6.0,65.9 L5.0,65.7 L4.0,65.9 L3.0,66.1 L2.0,66.3 L1.0,65.9 L0.0,65.6 Z" fill="#69a463"/></svg>
<div style="left:432px;top:35px;width:1px;height:492px;background:#e8b450;"></div>
<div style="left:432px;top:265px;width:1px;height:86px;background:#e2d87c;"></div>
<div style="left:432px;top:353px;width:1px;height:85px;background:#d6dc9c;"></div>
<div style="left:432px;top:441px;width:1px;height:83.5px;background:#e2d87c;"></div>
<svg style="left:425px;top:29px" width="14" height="8" viewBox="0 0 14 8"><path d="M0.5,0.5 L13.5,0.5 L7,7.5 Z" fill="#f2b844"/></svg>
<div style="left:0px;top:0px;width:925px;height:29px;background:#3f4244;"></div>
<div style="left:0px;top:27px;width:925px;height:2px;background:#393c3e;"></div>
<div style="left:8px;top:0px;width:23px;height:16px;background:#56595b;"></div>
<div style="left:37px;top:0px;width:23px;height:16px;background:#2b2d2f;"></div>
<div style="left:65.6px;top:0px;width:23.4px;height:16px;background:#56595b;"></div>
<div style="left:360px;top:0px;width:23px;height:16px;background:#56595b;"></div>
<div style="left:389px;top:0px;width:23px;height:16px;background:#56595b;"></div>
<div style="left:417px;top:0px;width:23px;height:16px;background:#56595b;"></div>
<div style="left:446px;top:0px;width:23px;height:16px;background:#56595b;"></div>
<div style="left:474.5px;top:0px;width:23px;height:16px;background:#56595b;"></div>
<div style="left:503.5px;top:0px;width:23px;height:16px;background:#56595b;"></div>
<div style="left:532px;top:0px;width:23px;height:16px;background:#56595b;"></div>
<div style="left:849px;top:0px;width:23px;height:16px;background:#56595b;"></div>
<div style="left:877px;top:0px;width:23px;height:16px;background:#56595b;"></div>
<svg style="left:14px;top:2px" width="11" height="11" viewBox="0 0 11 11"><g fill="#dfe3e4"><circle cx="5.5" cy="5" r="1.3"/><circle cx="5.5" cy="1.8" r="1.2"/><circle cx="5.5" cy="8.4" r="1.2"/><circle cx="2.2" cy="5" r="1.2"/><circle cx="8.8" cy="5" r="1.2"/><rect x="2" y="4.5" width="7" height="1"/><rect x="5" y="1.5" width="1" height="7"/></g></svg>
<svg style="left:44px;top:2px" width="10" height="12" viewBox="0 0 10 12"><path d="M2,1 L2,9.2 L4,7.4 L5.5,10.6 L6.9,10 L5.5,6.9 L8,6.8 Z" fill="#dfe3e4"/></svg>
<svg style="left:69px;top:3px" width="18" height="10" viewBox="0 0 18 10"><path d="M1,8.6 L10,1.2 L10,8.6 Z" fill="#dfe3e4"/><path d="M10,1.6 L15.4,1.6 L15.4,8.2 L10,8.2" fill="none" stroke="#dfe3e4" stroke-width="1"/></svg>
<svg style="left:365px;top:1px" width="14" height="13" viewBox="0 0 14 13"><g stroke="#dfe3e4" stroke-width="1.1" fill="none"><path d="M3,1.5V11.5M7,1.5V11.5M11,1.5V11.5"/></g><g fill="#dfe3e4"><rect x="1.8" y="3" width="2.4" height="1.6"/><rect x="5.8" y="7.5" width="2.4" height="1.6"/><rect x="9.8" y="5" width="2.4" height="1.6"/><rect x="1.8" y="8" width="2.4" height="1.2"/><rect x="9.8" y="9" width="2.4" height="1.2"/><rect x="5.8" y="3" width="2.4" height="1.2"/></g></svg>
<svg style="left:394px;top:1px" width="13" height="13" viewBox="0 0 13 13"><circle cx="6.5" cy="6.2" r="5" fill="#dfe3e4"/><rect x="5.8" y="5.2" width="1.4" height="4" fill="#56595b"/><circle cx="6.5" cy="3.6" r="0.9" fill="#56595b"/></svg>
<svg style="left:423px;top:2px" width="12" height="11" viewBox="0 0 12 11"><rect x="1" y="0.8" width="9.6" height="9.4" fill="none" stroke="#dfe3e4" stroke-width="0.8" opacity="0.7"/><g fill="#dfe3e4"><rect x="1" y="0.8" width="3" height="2.6"/><rect x="7.6" y="0.8" width="3" height="2.6"/><rect x="1" y="7.6" width="3" height="2.6"/><rect x="7.6" y="7.6" width="3" height="2.6"/><circle cx="5.8" cy="5.5" r="1.6"/></g></svg>
<svg style="left:452px;top:0px" width="12" height="15" viewBox="0 0 12 15"><g fill="#dfe3e4"><rect x="2" y="3.5" width="2.6" height="6.5"/><rect x="6" y="5.5" width="2.6" height="4.5"/><circle cx="5.2" cy="12.8" r="1.1"/></g><rect x="1.4" y="0.8" width="7.8" height="9.6" fill="none" stroke="#dfe3e4" stroke-width="0.6" opacity="0.5"/></svg>
<svg style="left:480.5px;top:0px" width="12" height="15" viewBox="0 0 12 15"><g fill="#dfe3e4"><rect x="2" y="3.5" width="2.6" height="6.5"/><rect x="6" y="5.5" width="2.6" height="4.5"/><path d="M4,11.4 L6.8,12.8 L4,14.2 Z"/></g><rect x="1.4" y="0.8" width="7.8" height="9.6" fill="none" stroke="#dfe3e4" stroke-width="0.6" opacity="0.5"/></svg>
<svg style="left:509px;top:1px" width="14" height="13" viewBox="0 0 14 13"><g fill="#dfe3e4"><path d="M1.5,4 Q5,2.4 8.6,4 L8.6,10 Q5,11.8 1.5,10 Z" opacity="0.9"/><path d="M10.4,1 L11.8,2.8 L9,2.8 Z"/></g><path d="M3.6,4.2V10.6M6.5,4.2V10.6" stroke="#56595b" stroke-width="0.7"/></svg>
<svg style="left:537px;top:2px" width="14" height="12" viewBox="0 0 14 12"><path d="M2,10.5 L6,6.5 M6,6.5 Q6.5,3.5 9.5,1.5 M6,6.5 Q9,6.4 11.4,3.4" stroke="#dfe3e4" stroke-width="1.2" fill="none" stroke-linecap="round"/></svg>
<svg style="left:854px;top:1px" width="13" height="13" viewBox="0 0 13 13"><g fill="#dfe3e4"><circle cx="6.5" cy="2" r="1.4"/><circle cx="3.2" cy="3.8" r="1.3"/><circle cx="9.8" cy="3.8" r="1.3"/><circle cx="2" cy="6.6" r="1.2"/><circle cx="11" cy="6.6" r="1.2"/><circle cx="6.5" cy="5.5" r="1.2"/></g><path d="M6.5,5.5V11.5M2,6.6L6.5,8.5L11,6.6M3.2,3.8L6.5,6.5L9.8,3.8" stroke="#dfe3e4" stroke-width="0.8" fill="none"/></svg>
<svg style="left:882px;top:1px" width="13" height="13" viewBox="0 0 13 13"><path d="M4.4,4.6H2.6V11.4H10.2V4.6H8.4" fill="none" stroke="#3d96c6" stroke-width="1"/><path d="M6.4,8.4V1.4M4.6,3.2L6.4,1.3L8.2,3.2" fill="none" stroke="#3d96c6" stroke-width="1"/></svg>
<svg style="left:918px;top:3px" width="8" height="9" viewBox="0 0 8 9"><circle cx="5.5" cy="4.2" r="2.8" fill="none" stroke="#dfe3e4" stroke-width="1.6"/></svg>
<div style="left:0px;top:28px;width:57px;height:499px;background:#424547;"></div>
<div style="left:57px;top:28px;width:3px;height:499px;background:#2c2f31;"></div>
<div style="left:0px;top:29px;width:57px;height:11.5px;background:#4b4e50;"></div>
<div class="t" style="left:0px;top:30px;width:53px;height:10px;line-height:10px;font-size:6.6px;color:#e8eaeb;font-weight:bold;text-align:center;">Vocal main</div>
<svg style="left:17px;top:46px" width="20" height="17" viewBox="0 0 20 17"><g stroke="#ccd0d2" stroke-width="0.9"><path d="M2.3,6.1V10.7M4,4.4V12.4M6.3,1.1V15.7M8.3,5.7V11.1M10.3,6.7V10.1M12.4,5V11.8M14.3,2.7V14.1M16.3,6.1V10.7"/></g></svg>
<div style="left:2px;top:70px;width:50px;height:5px;background:#1fbfe2;border-radius:1px;"></div>
<div style="left:2px;top:81px;width:50px;height:11px;background:#444749;border:1px solid #4b4e50;border-radius:1px;"></div>
<div class="t" style="left:2px;top:81px;width:50px;height:11px;line-height:11px;font-size:6.7px;color:#e8eaeb;font-weight:bold;text-align:center;">Don't record</div>
<div style="left:2px;top:106px;width:50px;height:15px;background:#494c4e;border:1px solid #4f5254;border-radius:1px;"></div>
<div class="t" style="left:2px;top:106px;width:50px;height:15px;line-height:15px;font-size:6.4px;color:#e8eaeb;font-weight:bold;text-align:center;">EQ</div>
<div style="left:2px;top:129px;width:50px;height:11px;background:#5a5e60;border-radius:1px;"></div>
<div class="t" style="left:7.5px;top:129px;width:40px;height:11px;line-height:11px;font-size:6.4px;color:#83878a;font-weight:normal;text-align:left;">VocalTune</div>
<svg style="left:41px;top:130px" width="9" height="9" viewBox="0 0 9 9"><circle cx="4.5" cy="4.7" r="2.2" fill="none" stroke="#3cb055" stroke-width="1"/></svg>
<div style="left:2px;top:142px;width:50px;height:11px;background:#424547;border:1px solid #4b4e50;border-radius:1px;"></div>
<div class="t" style="left:2px;top:142px;width:39px;height:11px;line-height:11px;font-size:5.6px;color:#e8eaeb;font-weight:bold;text-align:center;">ADD EFX</div>
<div style="left:2.5px;top:194px;width:13.5px;height:13.6px;background:#505456;"></div>
<div class="t" style="left:2.5px;top:194px;width:13.5px;height:13.6px;line-height:13.6px;font-size:7.6px;color:#e4e6e7;font-weight:bold;text-align:center;-webkit-text-stroke:0.3px #e4e6e7;">M</div>
<div style="left:17.1px;top:194px;width:13.0px;height:13.6px;background:#505456;"></div>
<div class="t" style="left:17.1px;top:194px;width:13.0px;height:13.6px;line-height:13.6px;font-size:7.6px;color:#e4e6e7;font-weight:bold;text-align:center;-webkit-text-stroke:0.3px #e4e6e7;">S</div>
<div style="left:38.0px;top:195.0px;width:12.0px;height:12.0px;background:#505456;border-radius:50%;border:0.8px solid #35383a;"></div>
<div style="left:41.4px;top:198.4px;width:5.2px;height:5.2px;background:#a4a8aa;border-radius:50%;"></div>
<div style="left:2px;top:222px;width:50px;height:1px;background:#1e2022;"></div>
<div style="left:21px;top:218px;width:10px;height:10px;background:#6c7072;border-radius:50%;"></div>
<div class="t" style="left:17px;top:231px;width:20px;height:10px;line-height:10px;font-size:6.4px;color:#e8eaeb;font-weight:bold;text-align:center;">0</div>
<div style="left:12.5px;top:248px;width:12.5px;height:227px;background:#242628;"></div>
<div style="left:25px;top:248px;width:16px;height:227px;background:#47494b;"></div>
<div style="left:31px;top:260px;width:2px;height:204px;background:#232527;"></div>
<div class="t" style="left:0px;top:247px;width:9px;height:6px;line-height:6px;font-size:4px;color:#6e7274;font-weight:normal;text-align:right;">6</div>
<div class="t" style="left:0px;top:258px;width:9px;height:6px;line-height:6px;font-size:4px;color:#6e7274;font-weight:normal;text-align:right;">-4</div>
<div class="t" style="left:0px;top:269.5px;width:9px;height:6px;line-height:6px;font-size:4px;color:#6e7274;font-weight:normal;text-align:right;">-6</div>
<div class="t" style="left:0px;top:292px;width:9px;height:6px;line-height:6px;font-size:4px;color:#6e7274;font-weight:normal;text-align:right;">-12</div>
<div class="t" style="left:0px;top:322px;width:9px;height:6px;line-height:6px;font-size:4px;color:#6e7274;font-weight:normal;text-align:right;">-20</div>
<div class="t" style="left:0px;top:360.4px;width:9px;height:6px;line-height:6px;font-size:4px;color:#6e7274;font-weight:normal;text-align:right;">-30</div>
<div class="t" style="left:0px;top:398px;width:9px;height:6px;line-height:6px;font-size:4px;color:#6e7274;font-weight:normal;text-align:right;">-40</div>
<div class="t" style="left:0px;top:436.3px;width:9px;height:6px;line-height:6px;font-size:4px;color:#6e7274;font-weight:normal;text-align:right;">-50</div>
<div class="t" style="left:0px;top:469.8px;width:9px;height:6px;line-height:6px;font-size:4px;color:#6e7274;font-weight:normal;text-align:right;">-60</div>
<div style="left:13px;top:350px;width:6px;height:125px;background:#86ef86;"></div>
<div style="left:19.5px;top:350px;width:5.5px;height:125px;background:#86ef86;"></div>
<div style="left:13px;top:348px;width:12px;height:1px;background:#62c062;"></div>
<div style="left:13px;top:391px;width:12px;height:1px;background:#3a6a3a;"></div>
<div style="left:26px;top:335px;width:13px;height:22px;background:#6e7072;border-radius:1.5px;background:linear-gradient(#7a7c7e,#5e6062 50%,#6a6c6e);"></div>
<div style="left:8px;top:482px;width:11.5px;height:12px;background:#4f5355;border-radius:1px;"></div>
<svg style="left:9px;top:484px" width="10" height="8" viewBox="0 0 10 8"><circle cx="3.4" cy="4" r="2.2" fill="#c8ccce"/><circle cx="6.4" cy="4" r="2.2" fill="#c8ccce"/></svg>
<div class="t" style="left:24.2px;top:483px;width:20px;height:10px;line-height:10px;font-size:6.8px;color:#dfe1e2;font-weight:bold;text-align:left;">+0.0</div>
<div style="left:-2px;top:508px;width:50px;height:10px;background:#46494b;border-radius:1px;"></div>
<div class="t" style="left:0px;top:508px;width:46px;height:10px;line-height:10px;font-size:6.5px;color:#e8eaeb;font-weight:bold;text-align:left;">Built-in Output</div>
<div style="left:1.5px;top:522.8px;width:42.5px;height:8px;background:#525557;border-radius:1px;"></div>
<div class="t" style="left:1.5px;top:523px;width:42.5px;height:9px;line-height:9px;font-size:6.6px;color:#d8dadc;font-weight:bold;text-align:center;">Add send</div>
<div style="left:60px;top:28px;width:171px;height:26px;background:#353839;"></div>
<div style="left:67px;top:54px;width:156px;height:473px;background:#3c3f41;"></div>
<div style="left:223px;top:54px;width:8px;height:473px;background:#282b2d;"></div>
<div style="left:64px;top:34px;width:20.5px;height:14.3px;background:#505355;"></div>
<svg style="left:69px;top:37px" width="11" height="9" viewBox="0 0 11 9"><g fill="#dfe3e4"><rect x="1" y="1" width="9" height="1.3"/><rect x="2.4" y="3.4" width="6.2" height="1.3"/><path d="M3.8,5.6H7.2L5.5,7.6Z"/></g></svg>
<svg style="left:95px;top:36px" width="10" height="10" viewBox="0 0 10 10"><circle cx="5" cy="5" r="2.3" fill="none" stroke="#c4c8ca" stroke-width="1.5"/><g stroke="#c4c8ca" stroke-width="1.3"><path d="M5,1V2.2M5,7.8V9M1,5H2.2M7.8,5H9M2.2,2.2L3,3M7,7L7.8,7.8M7.8,2.2L7,3M3,7L2.2,7.8"/></g></svg>
<div style="left:192.5px;top:34px;width:14px;height:14.3px;background:#505355;"></div>
<svg style="left:194px;top:36.6px" width="12" height="9" viewBox="0 0 12 9"><rect x="0.9" y="0.9" width="9.6" height="6.6" fill="none" stroke="#dfe3e4" stroke-width="0.9"/><path d="M3.4,1.6V4.8M5.7,1.6V4.8M8,1.6V4.8" stroke="#dfe3e4" stroke-width="0.9"/></svg>
<div style="left:208px;top:34px;width:18px;height:14.3px;background:#505355;"></div>
<svg style="left:211.5px;top:36px" width="11" height="11" viewBox="0 0 11 11"><circle cx="5.5" cy="5.3" r="4.3" fill="#dfe3e4"/><path d="M5.5,2.8V7.8M3,5.3H8" stroke="#56595b" stroke-width="1.3"/></svg>
<div style="left:59.5px;top:53.3px;width:7.5px;height:35px;background:#5a9dc4;"></div>
<div style="left:74px;top:59px;width:142px;height:9px;background:#303335;border-radius:1px;"></div>
<div class="t" style="left:74px;top:59px;width:142px;height:9px;line-height:9px;font-size:6.4px;color:#c4c7c9;font-weight:bold;text-align:center;">Built-in Output</div>
<div style="left:59.5px;top:88.3px;width:7.5px;height:87.2px;background:#e2c57a;"></div>
<div style="left:67px;top:88.3px;width:156px;height:1px;background:#34373a;"></div>
<svg style="left:60px;top:89.3px" width="7" height="5" viewBox="0 0 7 5"><path d="M1.2,1 L5.8,1 L3.5,4 Z" fill="#1e2022"/></svg>
<svg style="left:73px;top:91.3px" width="12" height="12" viewBox="0 0 12 12"><g fill="#858a8c"><path d="M0.6,5.6 L3.4,3.6 L3.4,7.6 Z"/><rect x="3.6" y="1.4" width="1" height="8.4"/><path d="M5,5.6 L7.6,3.2 L7.6,8 Z"/><rect x="7.9" y="3" width="0.9" height="5.2"/><path d="M9.2,4.6H10.6V6.6H9.2Z"/></g></svg>
<div class="t" style="left:91.7px;top:92.0px;width:120px;height:11px;line-height:11px;font-size:7.05px;color:#eef0f1;font-weight:bold;text-align:left;">Organ</div>
<div style="left:75px;top:110.3px;width:14px;height:13.6px;background:#505456;"></div>
<div class="t" style="left:75px;top:110.3px;width:14px;height:13.6px;line-height:13.6px;font-size:7.6px;color:#e4e6e7;font-weight:bold;text-align:center;-webkit-text-stroke:0.3px #e4e6e7;">M</div>
<div style="left:90.1px;top:110.3px;width:13.5px;height:13.6px;background:#505456;"></div>
<div class="t" style="left:90.1px;top:110.3px;width:13.5px;height:13.6px;line-height:13.6px;font-size:7.6px;color:#e4e6e7;font-weight:bold;text-align:center;-webkit-text-stroke:0.3px #e4e6e7;">S</div>
<div style="left:109.4px;top:110.9px;width:12.0px;height:12.0px;background:#4a4d4f;border-radius:50%;border:0.8px solid #35383a;"></div>
<div style="left:112.80000000000001px;top:114.30000000000001px;width:5.2px;height:5.2px;background:#a4a8aa;border-radius:50%;"></div>
<div style="left:74px;top:131.3px;width:142px;height:9px;background:#303335;border-radius:1px;"></div>
<div class="t" style="left:74px;top:131.3px;width:142px;height:9px;line-height:9px;font-size:6.4px;color:#c4c7c9;font-weight:bold;text-align:center;">Don't record</div>
<div style="left:74px;top:147.3px;width:142px;height:9px;background:#303335;border-radius:1px;"></div>
<div class="t" style="left:74px;top:147.3px;width:142px;height:9px;line-height:9px;font-size:6.4px;color:#c4c7c9;font-weight:bold;text-align:center;">Built-in Output</div>
<div style="left:59.5px;top:175.5px;width:7.5px;height:87.5px;background:#2f88a6;"></div>
<div style="left:67px;top:175.5px;width:156px;height:1px;background:#34373a;"></div>
<svg style="left:60px;top:176.5px" width="7" height="5" viewBox="0 0 7 5"><path d="M1.2,1 L5.8,1 L3.5,4 Z" fill="#1e2022"/></svg>
<svg style="left:73px;top:178.5px" width="12" height="12" viewBox="0 0 12 12"><g fill="#858a8c"><path d="M0.6,5.6 L3.4,3.6 L3.4,7.6 Z"/><rect x="3.6" y="1.4" width="1" height="8.4"/><path d="M5,5.6 L7.6,3.2 L7.6,8 Z"/><rect x="7.9" y="3" width="0.9" height="5.2"/><path d="M9.2,4.6H10.6V6.6H9.2Z"/></g></svg>
<div class="t" style="left:91.7px;top:179.2px;width:120px;height:11px;line-height:11px;font-size:7.05px;color:#eef0f1;font-weight:bold;text-align:left;">Background vocals</div>
<div style="left:75px;top:197.5px;width:14px;height:13.6px;background:#505456;"></div>
<div class="t" style="left:75px;top:197.5px;width:14px;height:13.6px;line-height:13.6px;font-size:7.6px;color:#e4e6e7;font-weight:bold;text-align:center;-webkit-text-stroke:0.3px #e4e6e7;">M</div>
<div style="left:90.1px;top:197.5px;width:13.5px;height:13.6px;background:#505456;"></div>
<div class="t" style="left:90.1px;top:197.5px;width:13.5px;height:13.6px;line-height:13.6px;font-size:7.6px;color:#e4e6e7;font-weight:bold;text-align:center;-webkit-text-stroke:0.3px #e4e6e7;">S</div>
<div style="left:109.4px;top:198.1px;width:12.0px;height:12.0px;background:#4a4d4f;border-radius:50%;border:0.8px solid #35383a;"></div>
<div style="left:112.80000000000001px;top:201.5px;width:5.2px;height:5.2px;background:#a4a8aa;border-radius:50%;"></div>
<div style="left:74px;top:218.5px;width:142px;height:9px;background:#303335;border-radius:1px;"></div>
<div class="t" style="left:74px;top:218.5px;width:142px;height:9px;line-height:9px;font-size:6.4px;color:#c4c7c9;font-weight:bold;text-align:center;">Don't record</div>
<div style="left:74px;top:234.5px;width:142px;height:9px;background:#303335;border-radius:1px;"></div>
<div class="t" style="left:74px;top:234.5px;width:142px;height:9px;line-height:9px;font-size:6.4px;color:#c4c7c9;font-weight:bold;text-align:center;">Built-in Output</div>
<div style="left:59.5px;top:263px;width:7.5px;height:88px;background:#88c884;"></div>
<div style="left:67px;top:263px;width:156px;height:1px;background:#34373a;"></div>
<svg style="left:60px;top:264px" width="7" height="5" viewBox="0 0 7 5"><path d="M1.2,1 L5.8,1 L3.5,4 Z" fill="#1e2022"/></svg>
<svg style="left:73.4px;top:267px" width="12" height="10" viewBox="0 0 12 10"><rect x="1" y="1.4" width="9.4" height="6" fill="none" stroke="#8e9294" stroke-width="0.9"/><rect x="1.8" y="2" width="7.8" height="2.4" fill="#a2a6a8"/><path d="M3.6,2V4.4M5.7,2V4.4M7.8,2V4.4" stroke="#5a5e60" stroke-width="0.6"/></svg>
<div class="t" style="left:91.7px;top:266.7px;width:120px;height:11px;line-height:11px;font-size:7.05px;color:#eef0f1;font-weight:bold;text-align:left;">6 - MIDI</div>
<div style="left:75px;top:285px;width:14px;height:13.6px;background:#505456;"></div>
<div class="t" style="left:75px;top:285px;width:14px;height:13.6px;line-height:13.6px;font-size:7.6px;color:#e4e6e7;font-weight:bold;text-align:center;-webkit-text-stroke:0.3px #e4e6e7;">M</div>
<div style="left:90.1px;top:285px;width:13.5px;height:13.6px;background:#505456;"></div>
<div class="t" style="left:90.1px;top:285px;width:13.5px;height:13.6px;line-height:13.6px;font-size:7.6px;color:#e4e6e7;font-weight:bold;text-align:center;-webkit-text-stroke:0.3px #e4e6e7;">S</div>
<div style="left:109.4px;top:285.6px;width:12.0px;height:12.0px;background:#4a4d4f;border-radius:50%;border:0.8px solid #35383a;"></div>
<div style="left:112.80000000000001px;top:289.0px;width:5.2px;height:5.2px;background:#f0355a;border-radius:50%;"></div>
<div style="left:74px;top:306px;width:142px;height:9px;background:#303335;border-radius:1px;"></div>
<div class="t" style="left:74px;top:306px;width:142px;height:9px;line-height:9px;font-size:6.4px;color:#c4c7c9;font-weight:bold;text-align:center;">All channels, all devices</div>
<div style="left:74px;top:322px;width:142px;height:9px;background:#303335;border-radius:1px;"></div>
<div class="t" style="left:74px;top:322px;width:142px;height:9px;line-height:9px;font-size:6.4px;color:#c4c7c9;font-weight:bold;text-align:center;">Piano (instrument)</div>
<div style="left:201px;top:285px;width:14px;height:13px;background:#505456;"></div>
<svg style="left:203.5px;top:287.5px" width="9" height="8" viewBox="0 0 9 8"><rect x="0.8" y="0.8" width="7.4" height="6.2" fill="none" stroke="#dfe3e4" stroke-width="0.9"/><rect x="0.8" y="0.8" width="7.4" height="2" fill="#dfe3e4"/></svg>
<div style="left:67px;top:351px;width:156px;height:87px;background:#585b5d;"></div>
<div style="left:59.5px;top:351px;width:7.5px;height:87px;background:#1fbde0;"></div>
<div style="left:67px;top:351px;width:156px;height:1px;background:#34373a;"></div>
<svg style="left:60px;top:352px" width="7" height="5" viewBox="0 0 7 5"><path d="M1.2,1 L5.8,1 L3.5,4 Z" fill="#1e2022"/></svg>
<svg style="left:73px;top:354px" width="12" height="12" viewBox="0 0 12 12"><g fill="#858a8c"><path d="M0.6,5.6 L3.4,3.6 L3.4,7.6 Z"/><rect x="3.6" y="1.4" width="1" height="8.4"/><path d="M5,5.6 L7.6,3.2 L7.6,8 Z"/><rect x="7.9" y="3" width="0.9" height="5.2"/><path d="M9.2,4.6H10.6V6.6H9.2Z"/></g></svg>
<div class="t" style="left:91.7px;top:354.7px;width:120px;height:11px;line-height:11px;font-size:7.05px;color:#eef0f1;font-weight:bold;text-align:left;">Vocal main</div>
<div style="left:75px;top:373px;width:14px;height:13.6px;background:#474a4c;"></div>
<div class="t" style="left:75px;top:373px;width:14px;height:13.6px;line-height:13.6px;font-size:7.6px;color:#e4e6e7;font-weight:bold;text-align:center;-webkit-text-stroke:0.3px #e4e6e7;">M</div>
<div style="left:90.1px;top:373px;width:13.5px;height:13.6px;background:#474a4c;"></div>
<div class="t" style="left:90.1px;top:373px;width:13.5px;height:13.6px;line-height:13.6px;font-size:7.6px;color:#e4e6e7;font-weight:bold;text-align:center;-webkit-text-stroke:0.3px #e4e6e7;">S</div>
<div style="left:109.4px;top:373.6px;width:12.0px;height:12.0px;background:#484b4d;border-radius:50%;border:0.8px solid #35383a;"></div>
<div style="left:112.80000000000001px;top:377.0px;width:5.2px;height:5.2px;background:#a4a8aa;border-radius:50%;"></div>
<div style="left:74px;top:394px;width:142px;height:9px;background:#303335;border-radius:1px;"></div>
<div class="t" style="left:74px;top:394px;width:142px;height:9px;line-height:9px;font-size:6.4px;color:#c4c7c9;font-weight:bold;text-align:center;">Don't record</div>
<div style="left:74px;top:410px;width:142px;height:9px;background:#303335;border-radius:1px;"></div>
<div class="t" style="left:74px;top:410px;width:142px;height:9px;line-height:9px;font-size:6.4px;color:#c4c7c9;font-weight:bold;text-align:center;">Built-in Output</div>
<div style="left:59.5px;top:438px;width:7.5px;height:89px;background:#88c67e;"></div>
<div style="left:67px;top:438px;width:156px;height:1px;background:#34373a;"></div>
<svg style="left:60px;top:439px" width="7" height="5" viewBox="0 0 7 5"><path d="M1.2,1 L5.8,1 L3.5,4 Z" fill="#1e2022"/></svg>
<svg style="left:73px;top:441px" width="12" height="12" viewBox="0 0 12 12"><g fill="#858a8c"><path d="M0.6,5.6 L3.4,3.6 L3.4,7.6 Z"/><rect x="3.6" y="1.4" width="1" height="8.4"/><path d="M5,5.6 L7.6,3.2 L7.6,8 Z"/><rect x="7.9" y="3" width="0.9" height="5.2"/><path d="M9.2,4.6H10.6V6.6H9.2Z"/></g></svg>
<div class="t" style="left:91.7px;top:441.7px;width:120px;height:11px;line-height:11px;font-size:7.05px;color:#eef0f1;font-weight:bold;text-align:left;">Vocal aux</div>
<div style="left:75px;top:460px;width:14px;height:13.6px;background:#505456;"></div>
<div class="t" style="left:75px;top:460px;width:14px;height:13.6px;line-height:13.6px;font-size:7.6px;color:#e4e6e7;font-weight:bold;text-align:center;-webkit-text-stroke:0.3px #e4e6e7;">M</div>
<div style="left:90.1px;top:460px;width:13.5px;height:13.6px;background:#505456;"></div>
<div class="t" style="left:90.1px;top:460px;width:13.5px;height:13.6px;line-height:13.6px;font-size:7.6px;color:#e4e6e7;font-weight:bold;text-align:center;-webkit-text-stroke:0.3px #e4e6e7;">S</div>
<div style="left:109.4px;top:460.6px;width:12.0px;height:12.0px;background:#4a4d4f;border-radius:50%;border:0.8px solid #35383a;"></div>
<div style="left:112.80000000000001px;top:464.0px;width:5.2px;height:5.2px;background:#a4a8aa;border-radius:50%;"></div>
<div style="left:74px;top:481px;width:142px;height:9px;background:#303335;border-radius:1px;"></div>
<div class="t" style="left:74px;top:481px;width:142px;height:9px;line-height:9px;font-size:6.4px;color:#c4c7c9;font-weight:bold;text-align:center;">Don't record</div>
<div style="left:74px;top:497px;width:142px;height:9px;background:#303335;border-radius:1px;"></div>
<div class="t" style="left:74px;top:497px;width:142px;height:9px;line-height:9px;font-size:6.4px;color:#c4c7c9;font-weight:bold;text-align:center;">Built-in Output</div>
<div style="left:224px;top:282px;width:6px;height:68px;background:#86ef86;"></div>
<div style="left:224px;top:391px;width:6px;height:47px;background:#86ef86;"></div>
<div style="left:224px;top:478px;width:6px;height:47px;background:#86ef86;"></div>
<div style="left:59.5px;top:525.2px;width:7.5px;height:2px;background:#2ab0c0;"></div>
<div style="left:67px;top:525px;width:164px;height:2px;background:#303335;"></div>
<div style="left:487px;top:71px;width:391px;height:376px;background:#2b2d2f;border-radius:4px 4px 3px 3px;box-shadow:0 3px 10px rgba(0,0,0,0.55),0 0 2px rgba(0,0,0,0.6);overflow:hidden;">
<div style="left:0px;top:0px;width:391px;height:14.2px;background:#e8e8e8;background:linear-gradient(#f6f6f6,#dedede);"></div>
<div style="left:4.4px;top:2.9px;width:8.6px;height:8.6px;background:#e4e4e4;border-radius:50%;border:1px solid #c2c2c2;"></div>
<div style="left:17.5px;top:2.9px;width:8.6px;height:8.6px;background:#e4e4e4;border-radius:50%;border:1px solid #c2c2c2;"></div>
<div style="left:30.7px;top:2.9px;width:8.6px;height:8.6px;background:#e4e4e4;border-radius:50%;border:1px solid #c2c2c2;"></div>
<div class="t" style="left:95.5px;top:0px;width:200px;height:15px;line-height:15px;font-size:9.2px;color:#7c7c7c;font-weight:normal;text-align:center;">VocalTune – Track 7 Effect 1</div>
<div style="left:0px;top:14.2px;width:391px;height:9px;background:#2f3234;"></div>
<div class="t" style="left:31px;top:15px;width:21px;height:8px;line-height:8px;font-size:5.4px;color:#e4e6e7;font-weight:bold;text-align:center;">0 dB</div>
<div class="t" style="left:73px;top:15px;width:21px;height:8px;line-height:8px;font-size:5.4px;color:#e4e6e7;font-weight:bold;text-align:center;">0 dB</div>
<div class="t" style="left:313px;top:15px;width:32px;height:8px;line-height:8px;font-size:5.4px;color:#e4e6e7;font-weight:bold;text-align:center;">CPU: 1.1%</div>
<div class="t" style="left:359px;top:15px;width:22px;height:8px;line-height:8px;font-size:6.0px;color:#e4e6e7;font-weight:bold;text-align:center;">32 bit</div>
<div style="left:0px;top:23.2px;width:391px;height:45.6px;background:#3b3e40;"></div>
<svg style="left:4px;top:36px" width="14" height="14" viewBox="0 0 14 14"><path d="M4.2,3.6 A4.6,4.6 0 1 0 9.8,3.6" fill="none" stroke="#3fba6a" stroke-width="1.9" stroke-linecap="round"/><path d="M7,1.2V6.8" stroke="#3fba6a" stroke-width="1.9" stroke-linecap="round"/></svg>
<div style="left:31.6px;top:32.6px;width:19.6px;height:19.6px;background:#707274;border-radius:50%;box-shadow:0 0 2.5px 2px #2d2f31;"></div>
<div style="left:40.2px;top:34.8px;width:2.4px;height:2.4px;background:#b4f8ae;border-radius:50%;box-shadow:0 0 2.5px 0.8px #5fe060;"></div>
<div style="left:73.9px;top:32.6px;width:19.6px;height:19.6px;background:#707274;border-radius:50%;box-shadow:0 0 2.5px 2px #2d2f31;"></div>
<div style="left:82.5px;top:34.8px;width:2.4px;height:2.4px;background:#b4f8ae;border-radius:50%;box-shadow:0 0 2.5px 0.8px #5fe060;"></div>
<div class="t" style="left:31px;top:59px;width:21px;height:9px;line-height:9px;font-size:5.6px;color:#e4e6e7;font-weight:bold;text-align:center;">Pre</div>
<div class="t" style="left:73px;top:59px;width:21px;height:9px;line-height:9px;font-size:5.6px;color:#e4e6e7;font-weight:bold;text-align:center;">Post</div>
<div style="left:164px;top:33px;width:217px;height:20.5px;background:#1d1f21;border-radius:1.5px;"></div>
<div class="t" style="left:168.6px;top:33px;width:100px;height:20.5px;line-height:20.5px;font-size:7.95px;color:#f2f3f4;font-weight:bold;text-align:left;">Medium attack</div>
<svg style="left:330px;top:37.5px" width="9" height="10" viewBox="0 0 9 10"><path d="M1.2,1.2H6.2L7.8,2.8V8.8H1.2Z" fill="none" stroke="#a2a6a8" stroke-width="0.9"/><rect x="2.6" y="1.4" width="3" height="2" fill="#a2a6a8"/><rect x="2.6" y="5.6" width="3.8" height="2.4" fill="#a2a6a8"/></svg>
<svg style="left:348px;top:37.5px" width="9" height="10" viewBox="0 0 9 10"><rect x="1.4" y="2.2" width="6.2" height="6.8" rx="0.8" fill="none" stroke="#a2a6a8" stroke-width="0.9"/><rect x="3" y="0.8" width="3" height="2" fill="#a2a6a8"/><path d="M4.5,4.2V7.4M3,5.8H6" stroke="#a2a6a8" stroke-width="0.8"/></svg>
<svg style="left:366px;top:37.6px" width="10" height="10" viewBox="0 0 10 10"><circle cx="5" cy="5" r="2.3" fill="none" stroke="#e4e6e7" stroke-width="1.6"/><g stroke="#e4e6e7" stroke-width="1.4"><path d="M5,0.8V2.2M5,7.8V9.2M0.8,5H2.2M7.8,5H9.2M2,2L3,3M7,7L8,8M8,2L7,3M3,7L2,8"/></g></svg>
<div class="t" style="left:17px;top:96px;width:25px;height:6px;line-height:6px;font-size:5.25px;color:#b8babc;font-weight:normal;text-align:left;">Input level</div>
<div style="left:30.3px;top:109.5px;width:8.8px;height:207px;background:#1d1f21;"></div>
<div style="left:30.3px;top:203.2px;width:8.8px;height:113.4px;background:#86ef86;"></div>
<div class="t" style="left:13px;top:107px;width:13px;height:6px;line-height:6px;font-size:4.2px;color:#7a7c7e;font-weight:normal;text-align:right;">0</div>
<div class="t" style="left:13px;top:118px;width:13px;height:6px;line-height:6px;font-size:4.2px;color:#7a7c7e;font-weight:normal;text-align:right;">-3</div>
<div class="t" style="left:13px;top:128px;width:13px;height:6px;line-height:6px;font-size:4.2px;color:#7a7c7e;font-weight:normal;text-align:right;">-6</div>
<div class="t" style="left:13px;top:149px;width:13px;height:6px;line-height:6px;font-size:4.2px;color:#7a7c7e;font-weight:normal;text-align:right;">-12</div>
<div class="t" style="left:13px;top:177px;width:13px;height:6px;line-height:6px;font-size:4.2px;color:#7a7c7e;font-weight:normal;text-align:right;">-20</div>
<div class="t" style="left:13px;top:211.5px;width:13px;height:6px;line-height:6px;font-size:4.2px;color:#7a7c7e;font-weight:normal;text-align:right;">-30</div>
<div class="t" style="left:13px;top:246.4px;width:13px;height:6px;line-height:6px;font-size:4.2px;color:#7a7c7e;font-weight:normal;text-align:right;">-40</div>
<div class="t" style="left:13px;top:281.4px;width:13px;height:6px;line-height:6px;font-size:4.2px;color:#7a7c7e;font-weight:normal;text-align:right;">-60</div>
<div class="t" style="left:13px;top:312.5px;width:13px;height:6px;line-height:6px;font-size:4.2px;color:#7a7c7e;font-weight:normal;text-align:right;">-90</div>
<div class="t" style="left:343.7px;top:96px;width:40px;height:6px;line-height:6px;font-size:5.25px;color:#b8babc;font-weight:normal;text-align:left;">Correction level</div>
<div style="left:358px;top:109px;width:9px;height:207.5px;background:#1d1f21;"></div>
<div class="t" style="left:369.6px;top:107.2px;width:20px;height:6px;line-height:6px;font-size:4.9px;color:#989a9c;font-weight:normal;text-align:left;">+100ct</div>
<div class="t" style="left:369.6px;top:159px;width:20px;height:6px;line-height:6px;font-size:4.9px;color:#989a9c;font-weight:normal;text-align:left;">+50</div>
<div class="t" style="left:369.6px;top:211.5px;width:20px;height:6px;line-height:6px;font-size:4.9px;color:#989a9c;font-weight:normal;text-align:left;">0</div>
<div class="t" style="left:369.6px;top:264px;width:20px;height:6px;line-height:6px;font-size:4.9px;color:#989a9c;font-weight:normal;text-align:left;">-50ct</div>
<div class="t" style="left:369.6px;top:316px;width:20px;height:6px;line-height:6px;font-size:4.9px;color:#989a9c;font-weight:normal;text-align:left;">-100ct</div>
<div class="t" style="left:77px;top:92px;width:100px;height:11px;line-height:11px;font-size:8.9px;color:#8c8e90;font-weight:normal;text-align:center;-webkit-text-stroke:0.2px #8c8e90;">Correction speed</div>
<div class="t" style="left:214px;top:92px;width:100px;height:11px;line-height:11px;font-size:9.05px;color:#8c8e90;font-weight:normal;text-align:center;-webkit-text-stroke:0.2px #8c8e90;">Correction amount</div>
<svg style="left:80.9px;top:108.2px" width="92" height="92" viewBox="0 0 92 92"><circle cx="46" cy="46" r="46" fill="#414345"/><line x1="46" y1="46" x2="72.96" y2="7.50" stroke="#2d2f31" stroke-width="1"/><line x1="46" y1="46" x2="19.04" y2="7.50" stroke="#2d2f31" stroke-width="1"/><line x1="46" y1="46" x2="-1.00" y2="46.00" stroke="#2d2f31" stroke-width="1"/><line x1="46" y1="46" x2="19.04" y2="84.50" stroke="#2d2f31" stroke-width="1"/><line x1="46" y1="46" x2="72.96" y2="84.50" stroke="#2d2f31" stroke-width="1"/><line x1="46" y1="46" x2="93.00" y2="46.00" stroke="#2d2f31" stroke-width="1"/><circle cx="46" cy="46.3" r="21.7" fill="#2d2f31"/><circle cx="46" cy="46.9" r="17.4" fill="#747678"/></svg>
<svg style="left:111.2px;top:145.1px" width="10" height="10" viewBox="0 0 10 10"><circle cx="5" cy="5" r="3.4" fill="#5fd85a" opacity="0.4"/><circle cx="5" cy="5" r="2.4" fill="#86f580"/></svg>
<div class="t" style="left:111.9px;top:118.2px;width:30px;height:6px;line-height:6px;font-size:4.45px;color:#85878a;font-weight:normal;text-align:center;">Medium</div>
<div class="t" style="left:81.3px;top:136.3px;width:30px;height:6px;line-height:6px;font-size:4.45px;color:#85878a;font-weight:normal;text-align:center;">Mid</div>
<div class="t" style="left:142.9px;top:136.3px;width:30px;height:6px;line-height:6px;font-size:4.45px;color:#85878a;font-weight:normal;text-align:center;">High</div>
<div class="t" style="left:81.3px;top:168.2px;width:30px;height:6px;line-height:6px;font-size:4.45px;color:#85878a;font-weight:normal;text-align:center;">Soft</div>
<div class="t" style="left:142.9px;top:168.2px;width:30px;height:6px;line-height:6px;font-size:4.45px;color:#85878a;font-weight:normal;text-align:center;">Extreme</div>
<svg style="left:218.1px;top:108.2px" width="92" height="92" viewBox="0 0 92 92"><circle cx="46" cy="46" r="46" fill="#414345"/><line x1="46" y1="46" x2="72.96" y2="7.50" stroke="#2d2f31" stroke-width="1"/><line x1="46" y1="46" x2="19.04" y2="7.50" stroke="#2d2f31" stroke-width="1"/><line x1="46" y1="46" x2="-1.00" y2="46.00" stroke="#2d2f31" stroke-width="1"/><line x1="46" y1="46" x2="19.04" y2="84.50" stroke="#2d2f31" stroke-width="1"/><line x1="46" y1="46" x2="72.96" y2="84.50" stroke="#2d2f31" stroke-width="1"/><line x1="46" y1="46" x2="93.00" y2="46.00" stroke="#2d2f31" stroke-width="1"/><circle cx="46" cy="46.3" r="21.7" fill="#2d2f31"/><circle cx="46" cy="46.9" r="17.4" fill="#747678"/></svg>
<svg style="left:266.7px;top:140.7px" width="10" height="10" viewBox="0 0 10 10"><circle cx="5" cy="5" r="3.4" fill="#5fd85a" opacity="0.4"/><circle cx="5" cy="5" r="2.4" fill="#86f580"/></svg>
<div class="t" style="left:249.1px;top:118.2px;width:30px;height:6px;line-height:6px;font-size:4.45px;color:#85878a;font-weight:normal;text-align:center;">Medium</div>
<div class="t" style="left:218.5px;top:136.3px;width:30px;height:6px;line-height:6px;font-size:4.45px;color:#85878a;font-weight:normal;text-align:center;">Mid</div>
<div class="t" style="left:280.1px;top:136.3px;width:30px;height:6px;line-height:6px;font-size:4.45px;color:#85878a;font-weight:normal;text-align:center;">High</div>
<div class="t" style="left:218.5px;top:168.2px;width:30px;height:6px;line-height:6px;font-size:4.45px;color:#85878a;font-weight:normal;text-align:center;">Soft</div>
<div class="t" style="left:280.1px;top:168.2px;width:30px;height:6px;line-height:6px;font-size:4.45px;color:#85878a;font-weight:normal;text-align:center;">Full</div>
<div class="t" style="left:51px;top:193.5px;width:41px;height:9px;line-height:9px;font-size:7.25px;color:#a8aaac;font-weight:normal;text-align:center;">Stickiness</div>
<div class="t" style="left:299px;top:193.5px;width:41px;height:9px;line-height:9px;font-size:7.2px;color:#a8aaac;font-weight:normal;text-align:center;">Tuning</div>
<div style="left:51.7px;top:204.1px;width:39.2px;height:39.2px;background:#3a3c3e;border-radius:50%;"></div>
<div style="left:59.8px;top:212.2px;width:23px;height:23px;background:#303234;border-radius:50%;"></div>
<div style="left:61.7px;top:214.1px;width:19.2px;height:19.2px;background:#707274;border-radius:50%;"></div>
<svg style="left:62.8px;top:217.4px" width="6" height="6" viewBox="0 0 6 6"><circle cx="3" cy="3" r="2" fill="#5fd85a" opacity="0.35"/><circle cx="3" cy="3" r="1.1" fill="#c4fbc0"/></svg>
<div style="left:299.9px;top:204.1px;width:39.2px;height:39.2px;background:#3a3c3e;border-radius:50%;"></div>
<div style="left:308.0px;top:212.2px;width:23px;height:23px;background:#303234;border-radius:50%;"></div>
<div style="left:309.9px;top:214.1px;width:19.2px;height:19.2px;background:#707274;border-radius:50%;"></div>
<svg style="left:321px;top:216.6px" width="6" height="6" viewBox="0 0 6 6"><circle cx="3" cy="3" r="2" fill="#5fd85a" opacity="0.35"/><circle cx="3" cy="3" r="1.1" fill="#c4fbc0"/></svg>
<div class="t" style="left:56px;top:246.5px;width:30px;height:7px;line-height:7px;font-size:5.7px;color:#b0b2b4;font-weight:normal;text-align:center;">30%</div>
<div class="t" style="left:299.5px;top:246.5px;width:40px;height:7px;line-height:7px;font-size:5.7px;color:#b0b2b4;font-weight:normal;text-align:center;">447.4 Hz</div>
<div style="left:151px;top:216.3px;width:37px;height:14.7px;background:transparent;border:1px solid #5c5e60;border-radius:1.5px;"></div>
<svg style="left:155px;top:220.5px" width="12" height="7" viewBox="0 0 12 7"><path d="M0.8,1 L10.6,1 L5.7,6.2 Z" fill="#8a8c8e"/></svg>
<div class="t" style="left:175px;top:216.3px;width:10px;height:14.7px;line-height:14.7px;font-size:6px;color:#8a8c8e;font-weight:bold;text-align:center;">D</div>
<div style="left:202.4px;top:216.3px;width:77.4px;height:14.7px;background:transparent;border:1px solid #5c5e60;border-radius:1.5px;"></div>
<svg style="left:207.6px;top:220.5px" width="12" height="7" viewBox="0 0 12 7"><path d="M0.8,1 L10.6,1 L5.7,6.2 Z" fill="#8a8c8e"/></svg>
<div class="t" style="left:245px;top:216.3px;width:29.5px;height:14.7px;line-height:14.7px;font-size:6.9px;color:#8a8c8e;font-weight:bold;text-align:right;">Major</div>
<div style="left:58.8px;top:265px;width:38px;height:63.6px;background:#6f6f6f;border-radius:0 0 3px 3px;border:0.8px solid #868686;border-top:none;"></div>
<div style="left:97.97px;top:265px;width:38px;height:63.6px;background:#ebebeb;border-radius:0 0 3px 3px;"></div>
<div style="left:137.14px;top:265px;width:38px;height:63.6px;background:#ebebeb;border-radius:0 0 3px 3px;"></div>
<div style="left:176.31px;top:265px;width:38px;height:63.6px;background:#6f6f6f;border-radius:0 0 3px 3px;border:0.8px solid #868686;border-top:none;"></div>
<div style="left:215.48px;top:265px;width:38px;height:63.6px;background:#ebebeb;border-radius:0 0 3px 3px;"></div>
<div style="left:254.65px;top:265px;width:38px;height:63.6px;background:#ebebeb;border-radius:0 0 3px 3px;"></div>
<div style="left:293.82px;top:265px;width:38px;height:63.6px;background:#ebebeb;border-radius:0 0 3px 3px;"></div>
<div style="left:85.27px;top:265px;width:24.5px;height:37px;background:#262626;border-radius:0 0 2.5px 2.5px;"></div>
<div style="left:124.44px;top:265px;width:24.5px;height:37px;background:#6b6b6b;border-radius:0 0 2.5px 2.5px;"></div>
<div style="left:202.78px;top:265px;width:24.5px;height:37px;background:#262626;border-radius:0 0 2.5px 2.5px;"></div>
<div style="left:241.95px;top:265px;width:24.5px;height:37px;background:#6b6b6b;border-radius:0 0 2.5px 2.5px;"></div>
<div style="left:281.12px;top:265px;width:24.5px;height:37px;background:#6b6b6b;border-radius:0 0 2.5px 2.5px;"></div>
<svg style="left:91.47px;top:250px" width="12" height="12" viewBox="0 0 12 12"><circle cx="6" cy="6" r="4.6" fill="#6fd96a" opacity="0.35"/><circle cx="6" cy="6" r="3.7" fill="#98f293"/></svg>
<svg style="left:130.64px;top:250px" width="12" height="12" viewBox="0 0 12 12"><circle cx="6" cy="6" r="3.5" fill="none" stroke="#808284" stroke-width="1.1"/></svg>
<svg style="left:208.98px;top:250px" width="12" height="12" viewBox="0 0 12 12"><circle cx="6" cy="6" r="4.6" fill="#6fd96a" opacity="0.35"/><circle cx="6" cy="6" r="3.7" fill="#98f293"/></svg>
<svg style="left:248.15px;top:250px" width="12" height="12" viewBox="0 0 12 12"><circle cx="6" cy="6" r="3.5" fill="none" stroke="#808284" stroke-width="1.1"/></svg>
<svg style="left:287.32px;top:250px" width="12" height="12" viewBox="0 0 12 12"><circle cx="6" cy="6" r="3.5" fill="none" stroke="#808284" stroke-width="1.1"/></svg>
<svg style="left:72.1px;top:333.7px" width="12" height="12" viewBox="0 0 12 12"><circle cx="6" cy="6" r="3.5" fill="none" stroke="#808284" stroke-width="1.1"/></svg>
<svg style="left:111.27px;top:333.7px" width="12" height="12" viewBox="0 0 12 12"><circle cx="6" cy="6" r="4.6" fill="#6fd96a" opacity="0.35"/><circle cx="6" cy="6" r="3.7" fill="#98f293"/></svg>
<svg style="left:150.44px;top:333.7px" width="12" height="12" viewBox="0 0 12 12"><circle cx="6" cy="6" r="4.6" fill="#6fd96a" opacity="0.35"/><circle cx="6" cy="6" r="3.7" fill="#98f293"/></svg>
<svg style="left:189.61px;top:333.7px" width="12" height="12" viewBox="0 0 12 12"><circle cx="6" cy="6" r="3.5" fill="none" stroke="#808284" stroke-width="1.1"/></svg>
<svg style="left:228.78px;top:333.7px" width="12" height="12" viewBox="0 0 12 12"><circle cx="6" cy="6" r="4.6" fill="#6fd96a" opacity="0.35"/><circle cx="6" cy="6" r="3.7" fill="#98f293"/></svg>
<svg style="left:267.95px;top:333.7px" width="12" height="12" viewBox="0 0 12 12"><circle cx="6" cy="6" r="4.6" fill="#6fd96a" opacity="0.35"/><circle cx="6" cy="6" r="3.7" fill="#98f293"/></svg>
<svg style="left:307.12px;top:333.7px" width="12" height="12" viewBox="0 0 12 12"><circle cx="6" cy="6" r="4.6" fill="#6fd96a" opacity="0.35"/><circle cx="6" cy="6" r="3.7" fill="#98f293"/></svg>
<div class="t" style="left:150px;top:350.5px;width:112px;height:9px;line-height:9px;font-size:6.9px;color:#b8963a;font-weight:bold;text-align:center;">Collapsing stereo to mono output</div>
<div style="left:0px;top:363px;width:391px;height:13px;background:#3b3e40;"></div>
</div>
</div></body></html>
